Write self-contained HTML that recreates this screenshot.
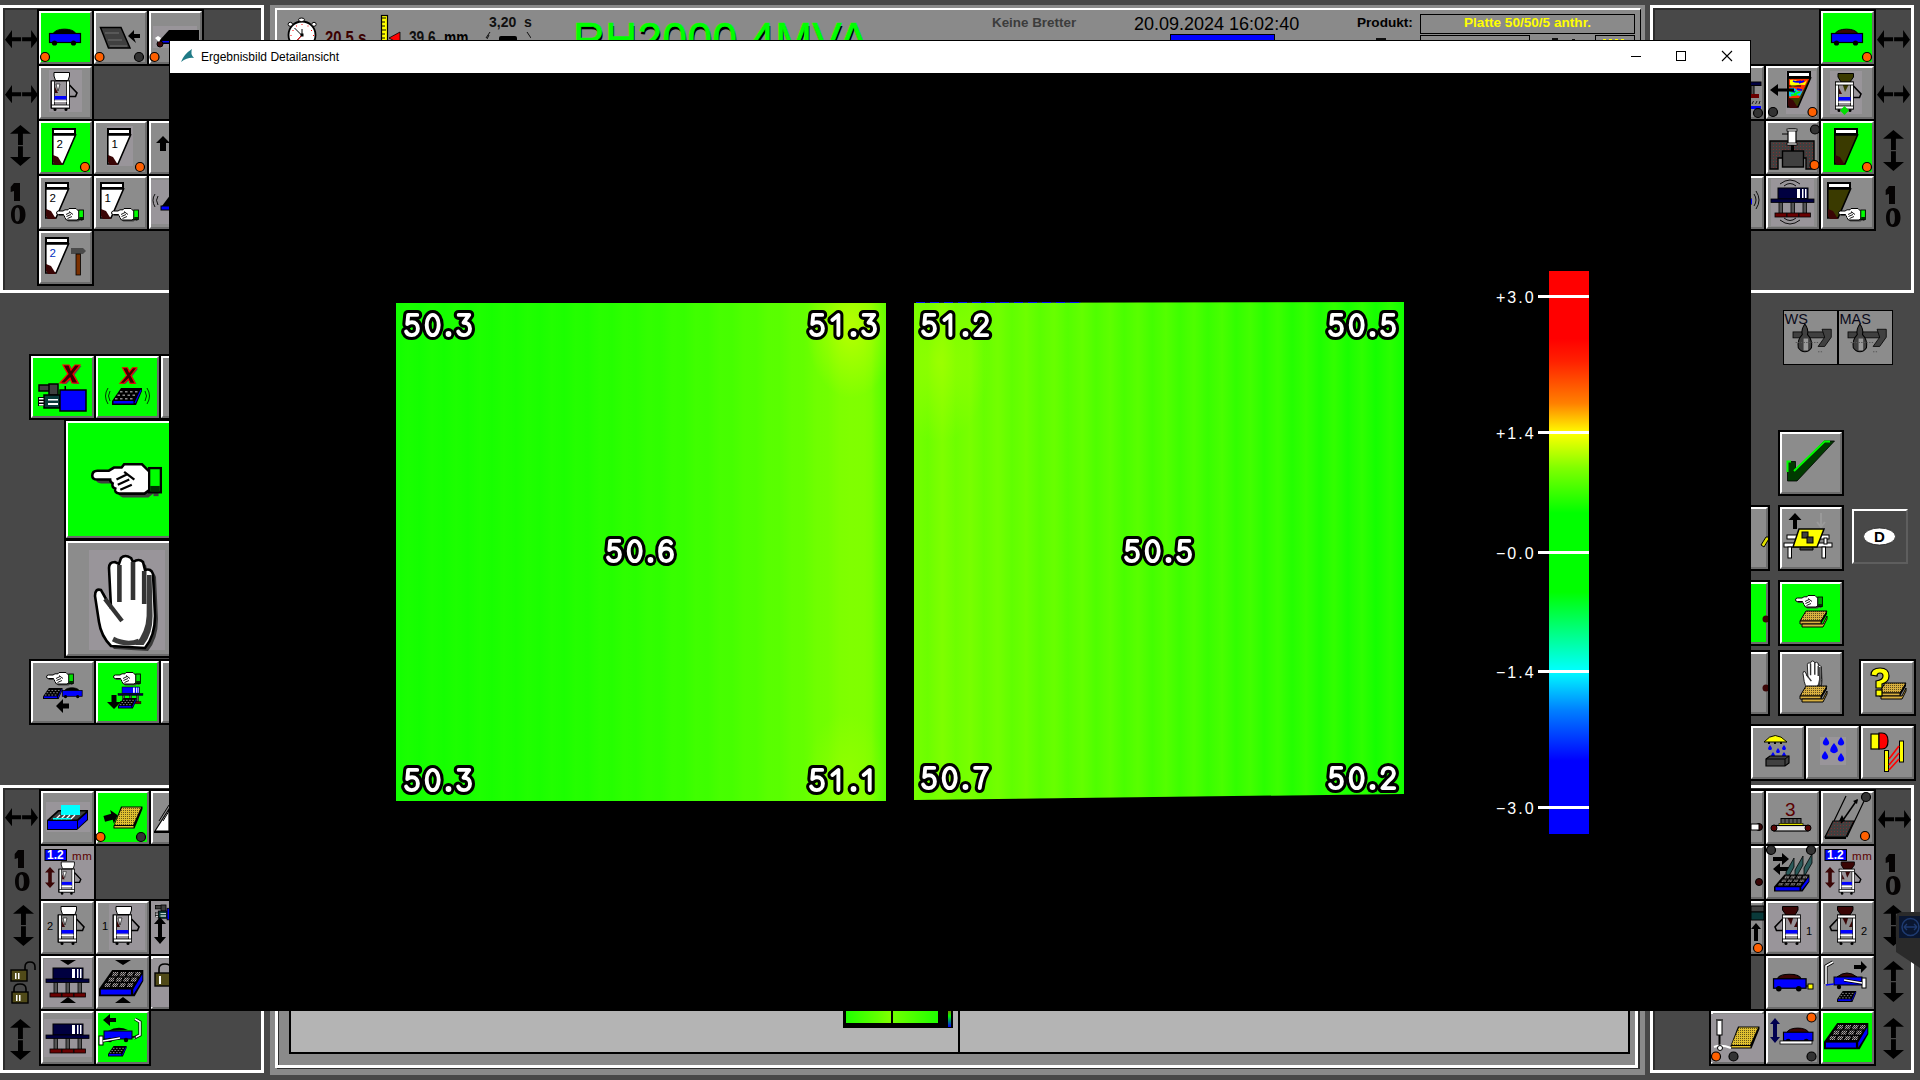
<!DOCTYPE html><html><head><meta charset="utf-8"><style>
html,body{margin:0;padding:0;width:1920px;height:1080px;overflow:hidden;background:#484848;font-family:"Liberation Sans",sans-serif}
div,span,svg{position:absolute;box-sizing:border-box}
.b{overflow:hidden}
.in{border-top:2px solid #fff;border-left:2px solid #fff;border-bottom:2px solid #6c6c6c;border-right:2px solid #6c6c6c}
.in svg{left:0;top:0;width:100%;height:100%}
.t{white-space:nowrap;line-height:1}
.num{font-size:34px;font-weight:bold;color:#fff;-webkit-text-stroke:6px #000;paint-order:stroke fill;letter-spacing:0.5px}
</style></head><body>
<div style="left:0px;top:5px;width:264px;height:288px;background:#484848;border:3px solid #fff;box-sizing:border-box"></div>
<div style="left:3px;top:8px;width:258px;height:282px;border-top:2px solid #2c2c2c;border-left:2px solid #2c2c2c;box-sizing:border-box"></div>
<div style="left:0px;top:785px;width:264px;height:288px;background:#484848;border:3px solid #fff;box-sizing:border-box"></div>
<div style="left:3px;top:788px;width:258px;height:282px;border-top:2px solid #2c2c2c;border-left:2px solid #2c2c2c;box-sizing:border-box"></div>
<div style="left:1650px;top:5px;width:264px;height:288px;background:#484848;border:3px solid #fff;box-sizing:border-box"></div>
<div style="left:1653px;top:8px;width:258px;height:282px;border-top:2px solid #2c2c2c;border-left:2px solid #2c2c2c;box-sizing:border-box"></div>
<div style="left:1650px;top:785px;width:264px;height:288px;background:#484848;border:3px solid #fff;box-sizing:border-box"></div>
<div style="left:1653px;top:788px;width:258px;height:282px;border-top:2px solid #2c2c2c;border-left:2px solid #2c2c2c;box-sizing:border-box"></div>
<svg style="left:0;top:0;width:0;height:0"><defs><pattern id="dots" width="2" height="2" patternUnits="userSpaceOnUse"><rect x="0" y="0" width="1" height="1" fill="#000" opacity="0.55"/></pattern><pattern id="rdots" width="3" height="3" patternUnits="userSpaceOnUse"><rect width="3" height="3" fill="#404040"/><rect x="1" y="1" width="1" height="1" fill="#803030"/></pattern><pattern id="speck" width="2" height="2" patternUnits="userSpaceOnUse"><rect width="2" height="2" fill="#222"/><rect width="1" height="1" fill="#b0a8a8"/><rect x="1" y="1" width="1" height="1" fill="#8a8484"/></pattern></defs></svg>
<svg style="left:4.9px;top:29.7px;width:34px;height:19px" viewBox="0 0 34 19"><path d="M0 9.7 L7 0 V7.2 H16.1 V11.3 H7 V18.3 Z M33 9.7 L26.1 0 V7.2 H17.1 V11.3 H26.1 V18.3 Z" fill="#000"/></svg>
<svg style="left:4.9px;top:84.5px;width:34px;height:19px" viewBox="0 0 34 19"><path d="M0 9.7 L7 0 V7.2 H16.1 V11.3 H7 V18.3 Z M33 9.7 L26.1 0 V7.2 H17.1 V11.3 H26.1 V18.3 Z" fill="#000"/></svg>
<svg style="left:10.0px;top:125.0px;width:22px;height:42px" viewBox="0 0 22 42"><path d="M10.4 0 L21 8.8 H12.9 V19.9 H8 V8.8 H0 Z M10.4 41.1 L21 32.1 H12.9 V21.3 H8 V32.1 H0 Z" fill="#000"/></svg>
<svg style="left:10px;top:182px;width:17px;height:43px" viewBox="0 0 17 43"><path d="M4 1 H10 V19 H4 V9 L0.7 10 V5 Z" fill="#050303"/><path d="M8.25 23 C13.2 23 15.5 27 15.5 32.5 C15.5 38 13.2 42 8.25 42 C3.3 42 1 38 1 32.5 C1 27 3.3 23 8.25 23 Z M7.35 25.6 C5.4 25.6 4.8 28.5 4.8 32.5 C4.8 36.5 5.4 39.4 7.35 39.4 C9.3 39.4 9.9 36.5 9.9 32.5 C9.9 28.5 9.3 25.6 7.35 25.6 Z" fill="#050303" fill-rule="evenodd"/></svg>
<div class="b" style="left:37px;top:9px;width:57px;height:57px;background:#000"><div class="in" style="left:2px;top:2px;width:53px;height:53px;background:#00ff00"></div><svg style="left:2px;top:2px;width:53px;height:53px" viewBox="0 0 53 53"><g transform="translate(10,17) scale(1.0)"><path d="M4 6 C6 -0.5 25 -0.5 27 6 Z" fill="#000" stroke="#000" stroke-width="1"/><rect x="0.5" y="5.5" width="31" height="9" fill="#0000ff" stroke="#000" stroke-width="1.2"/><circle cx="5.5" cy="15" r="2.6" fill="#000"/><circle cx="24.5" cy="15" r="2.6" fill="#000"/></g><circle cx="6" cy="46" r="4.5" fill="#ff6000" stroke="#000" stroke-width="1.2"/></svg></div>
<div class="b" style="left:92px;top:9px;width:57px;height:57px;background:#000"><div class="in" style="left:2px;top:2px;width:53px;height:53px;background:#8c8c8c"></div><svg style="left:2px;top:2px;width:53px;height:53px" viewBox="0 0 53 53"><path d="M6.5 16.5 H27 L36 37 H14.5 Z" fill="#404040" stroke="#000" stroke-width="1.5"/><path d="M11 22 H25 M14 29 H28 M16 35 H33" stroke="#707070" stroke-width="1"/><path d="M34 25 L40 19 L40 23 L46 23 L46 27 L40 27 L42 32 Z" fill="#000"/><circle cx="5.5" cy="46" r="4.5" fill="#ff6000" stroke="#000" stroke-width="1.2"/><circle cx="45" cy="46" r="4.5" fill="#333" stroke="#000" stroke-width="1.2"/></svg></div>
<div class="b" style="left:147px;top:9px;width:57px;height:57px;background:#000"><div class="in" style="left:2px;top:2px;width:53px;height:53px;background:#8c8c8c"></div><svg style="left:2px;top:2px;width:53px;height:53px" viewBox="0 0 53 53"><rect x="4" y="15" width="44" height="22" fill="#99959a"/><path d="M10 30 L20 19 H50 V33 H12 Z" fill="#000"/><rect x="12" y="30" width="38" height="1.5" fill="#0000ff"/><circle cx="11" cy="33" r="3" fill="#3a0505" stroke="#000"/><path d="M6 27 L9 25 L12 27 L10 31 Z" fill="#fff"/><circle cx="5.5" cy="46" r="4.5" fill="#ff6000" stroke="#000" stroke-width="1.2"/></svg></div>
<div class="b" style="left:37px;top:64px;width:57px;height:57px;background:#000"><div class="in" style="left:2px;top:2px;width:53px;height:53px;background:#8c8c8c"></div><svg style="left:2px;top:2px;width:53px;height:53px" viewBox="0 0 53 53"><rect x="10" y="4" width="33" height="42" fill="#99959a"/><g transform="translate(10,6)"><path d="M5 0.5 H20.5 V4 L19 8.5 H6.5 L5 4 Z" fill="#fff" stroke="#000" stroke-width="1"/><rect x="2" y="9" width="18.5" height="27" fill="none" stroke="#000" stroke-width="1"/><rect x="2.5" y="9" width="3" height="27" fill="#fff" stroke="#000" stroke-width="0.8"/><rect x="17.5" y="9" width="3" height="27" fill="#fff" stroke="#000" stroke-width="0.8"/><rect x="2.5" y="33" width="18" height="3" fill="#fff" stroke="#000" stroke-width="0.8"/><path d="M7 12 L11 12 L9 19 Z" fill="#fff" stroke="#000" stroke-width="0.6"/><path d="M6 15 L9 21 H6 Z" fill="#3a0505"/><rect x="5.5" y="24" width="12" height="3.5" fill="#0000ff"/><rect x="5.5" y="28.5" width="12" height="1.5" fill="#fff"/><path d="M20.5 13 L28 21 L26.5 24.5 H20.5" fill="none" stroke="#000" stroke-width="1.6"/><circle cx="6" cy="37.5" r="1.5" fill="#000"/><circle cx="17" cy="37.5" r="1.5" fill="#000"/></g></svg></div>
<div class="b" style="left:37px;top:119px;width:57px;height:57px;background:#000"><div class="in" style="left:2px;top:2px;width:53px;height:53px;background:#00ff00"></div><svg style="left:2px;top:2px;width:53px;height:53px" viewBox="0 0 53 53"><g><rect x="13" y="7" width="24" height="7" fill="#000"/><rect x="15" y="9" width="20" height="3" fill="#fff"/><path d="M13.8 14 H36.5 L24 43 H13.8 Z" fill="#fff" stroke="#000" stroke-width="1.6"/><path d="M14 34 L19 36 L24 44 L16 44 L14 41 Z" fill="#3a0505"/><text x="17.5" y="27" font-size="11.5" font-family="Liberation Sans" fill="#000">2</text></g><circle cx="46" cy="46" r="4.5" fill="#ff6000" stroke="#000" stroke-width="1.2"/></svg></div>
<div class="b" style="left:92px;top:119px;width:57px;height:57px;background:#000"><div class="in" style="left:2px;top:2px;width:53px;height:53px;background:#8c8c8c"></div><svg style="left:2px;top:2px;width:53px;height:53px" viewBox="0 0 53 53"><rect x="13" y="5" width="26" height="40" fill="#99959a"/><g><rect x="13" y="7" width="24" height="7" fill="#000"/><rect x="15" y="9" width="20" height="3" fill="#fff"/><path d="M13.8 14 H36.5 L24 43 H13.8 Z" fill="#fff" stroke="#000" stroke-width="1.6"/><path d="M14 34 L19 36 L24 44 L16 44 L14 41 Z" fill="#3a0505"/><text x="17.5" y="27" font-size="11.5" font-family="Liberation Sans" fill="#000">1</text></g><circle cx="46" cy="46" r="4.5" fill="#ff6000" stroke="#000" stroke-width="1.2"/></svg></div>
<div class="b" style="left:147px;top:119px;width:57px;height:57px;background:#000"><div class="in" style="left:2px;top:2px;width:53px;height:53px;background:#8c8c8c"></div><svg style="left:2px;top:2px;width:53px;height:53px" viewBox="0 0 53 53"><path d="M14 15 L21 22 H17 V30 H11 V22 H7 Z" fill="#000"/></svg></div>
<div class="b" style="left:37px;top:174px;width:57px;height:57px;background:#000"><div class="in" style="left:2px;top:2px;width:53px;height:53px;background:#8c8c8c"></div><svg style="left:2px;top:2px;width:53px;height:53px" viewBox="0 0 53 53"><g><rect x="6" y="6" width="24" height="7" fill="#000"/><rect x="8" y="8" width="20" height="3" fill="#fff"/><path d="M6.8 13 H29.5 L17 42 H6.8 Z" fill="#fff" stroke="#000" stroke-width="1.6"/><path d="M7 33 L12 35 L17 43 L9 43 L7 40 Z" fill="#3a0505"/><text x="10.5" y="26" font-size="11.5" font-family="Liberation Sans" fill="#000">2</text></g><g transform="translate(17,32)"><path d="M0.5 5 Q0.5 3 2.5 3 H7 L9 1.8 H12 L13 0.5 H20 L23 3.5 V10.5 L21 12 H11 Q9 11.5 9.5 10 Q8 9.5 8.5 8 Q7.5 7.5 7.5 6.5 H2.5 Q0.5 6.5 0.5 5 Z" fill="#404040" transform="translate(1.5,1.5)"/><path d="M0.5 5 Q0.5 3 2.5 3 H7 L9 1.8 H12 L13 0.5 H20 L23 3.5 V10.5 L21 12 H11 Q9 11.5 9.5 10 Q8 9.5 8.5 8 Q7.5 7.5 7.5 6.5 H2.5 Q0.5 6.5 0.5 5 Z" fill="#fff" stroke="#000" stroke-width="1"/><path d="M10 6.5 L14 4.5 M10.5 8.5 L15 6.5 M11.5 10.5 L16 8.5 M13 3.5 L17 6.5" stroke="#000" stroke-width="0.9" fill="none"/><rect x="24.5" y="3" width="2" height="10" fill="#404040"/><rect x="22.8" y="2" width="4.6" height="9.5" fill="#00ff00" stroke="#000" stroke-width="0.9"/><rect x="23.2" y="9" width="3.8" height="2" fill="#003000"/></g></svg></div>
<div class="b" style="left:92px;top:174px;width:57px;height:57px;background:#000"><div class="in" style="left:2px;top:2px;width:53px;height:53px;background:#8c8c8c"></div><svg style="left:2px;top:2px;width:53px;height:53px" viewBox="0 0 53 53"><g><rect x="6" y="6" width="24" height="7" fill="#000"/><rect x="8" y="8" width="20" height="3" fill="#fff"/><path d="M6.8 13 H29.5 L17 42 H6.8 Z" fill="#fff" stroke="#000" stroke-width="1.6"/><path d="M7 33 L12 35 L17 43 L9 43 L7 40 Z" fill="#3a0505"/><text x="10.5" y="26" font-size="11.5" font-family="Liberation Sans" fill="#000">1</text></g><g transform="translate(17,32)"><path d="M0.5 5 Q0.5 3 2.5 3 H7 L9 1.8 H12 L13 0.5 H20 L23 3.5 V10.5 L21 12 H11 Q9 11.5 9.5 10 Q8 9.5 8.5 8 Q7.5 7.5 7.5 6.5 H2.5 Q0.5 6.5 0.5 5 Z" fill="#404040" transform="translate(1.5,1.5)"/><path d="M0.5 5 Q0.5 3 2.5 3 H7 L9 1.8 H12 L13 0.5 H20 L23 3.5 V10.5 L21 12 H11 Q9 11.5 9.5 10 Q8 9.5 8.5 8 Q7.5 7.5 7.5 6.5 H2.5 Q0.5 6.5 0.5 5 Z" fill="#fff" stroke="#000" stroke-width="1"/><path d="M10 6.5 L14 4.5 M10.5 8.5 L15 6.5 M11.5 10.5 L16 8.5 M13 3.5 L17 6.5" stroke="#000" stroke-width="0.9" fill="none"/><rect x="24.5" y="3" width="2" height="10" fill="#404040"/><rect x="22.8" y="2" width="4.6" height="9.5" fill="#00ff00" stroke="#000" stroke-width="0.9"/><rect x="23.2" y="9" width="3.8" height="2" fill="#003000"/></g></svg></div>
<div class="b" style="left:147px;top:174px;width:57px;height:57px;background:#000"><div class="in" style="left:2px;top:2px;width:53px;height:53px;background:#8c8c8c"></div><svg style="left:2px;top:2px;width:53px;height:53px" viewBox="0 0 53 53"><rect x="2" y="4" width="48" height="44" fill="#99959a"/><path d="M6 18 Q2 24 6 31 M9 20 Q6 24 9 29" fill="none" stroke="#000" stroke-width="0.9"/><rect x="12" y="30" width="20" height="4" fill="#0000ff" stroke="#000"/><path d="M13 30 L22 18 L28 18 L20 30Z" fill="#000"/></svg></div>
<div class="b" style="left:37px;top:229px;width:57px;height:57px;background:#000"><div class="in" style="left:2px;top:2px;width:53px;height:53px;background:#8c8c8c"></div><svg style="left:2px;top:2px;width:53px;height:53px" viewBox="0 0 53 53"><g><rect x="6" y="6" width="24" height="7" fill="#000"/><rect x="8" y="8" width="20" height="3" fill="#fff"/><path d="M6.8 13 H29.5 L17 42 H6.8 Z" fill="#fff" stroke="#000" stroke-width="1.6"/><path d="M7 33 L12 35 L17 43 L9 43 L7 40 Z" fill="#3a0505"/><text x="10.5" y="26" font-size="11.5" font-family="Liberation Sans" fill="#0030c0">2</text></g><g transform="translate(32,17)"><path d="M0 0 H12 L15 3 L12 6 H0 Z" fill="#4a4a4a"/><rect x="5" y="6" width="4.5" height="21" fill="#7a3000" stroke="#000" stroke-width="0.8"/></g></svg></div>
<div class="b" style="left:29px;top:354px;width:67px;height:66px;background:#000"><div class="in" style="left:2px;top:2px;width:63px;height:62px;background:#00ff00"></div><svg style="left:2px;top:2px;width:63px;height:62px" viewBox="0 0 63 62"><g transform="translate(28,8) scale(1.0)"><path d="M4 1 H10 L12 6 L16 1 H21 L14 10 L19 19 H13 L11 14 L6 19 H1 L9 10 Z" fill="#505050" transform="translate(1.5,1)"/><path d="M4 1 H10 L12 6 L16 1 H21 L14 10 L19 19 H13 L11 14 L6 19 H1 L9 10 Z" fill="#3a0000" stroke="#ff0000" stroke-width="1.2"/></g><g transform="translate(7,28)"><rect x="1" y="1" width="11" height="6" fill="#404040" stroke="#000" stroke-width="1.5"/><rect x="11" y="0" width="9" height="11" fill="#404040" stroke="#000" stroke-width="1.5"/><rect x="6" y="11" width="16" height="13" fill="#0a3a3a" stroke="#000" stroke-width="1.5"/><rect x="10" y="15" width="10" height="1.5" fill="#fff"/><rect x="10" y="19" width="10" height="2" fill="#fff"/><rect x="0" y="13" width="6" height="9" fill="#000"/><rect x="1" y="14" width="4.5" height="1.5" fill="#fff"/><rect x="1" y="17" width="4.5" height="1.5" fill="#fff"/><rect x="1" y="20" width="4.5" height="1.5" fill="#fff"/><rect x="22" y="6" width="26" height="21" fill="#0000ff" stroke="#000" stroke-width="1.5"/><rect x="26.5" y="2" width="1.5" height="4" fill="#000"/></g></svg></div>
<div class="b" style="left:94px;top:354px;width:67px;height:66px;background:#000"><div class="in" style="left:2px;top:2px;width:63px;height:62px;background:#00ff00"></div><svg style="left:2px;top:2px;width:63px;height:62px" viewBox="0 0 63 62"><g transform="translate(23,11) scale(0.85)"><path d="M4 1 H10 L12 6 L16 1 H21 L14 10 L19 19 H13 L11 14 L6 19 H1 L9 10 Z" fill="#505050" transform="translate(1.5,1)"/><path d="M4 1 H10 L12 6 L16 1 H21 L14 10 L19 19 H13 L11 14 L6 19 H1 L9 10 Z" fill="#3a0000" stroke="#ff0000" stroke-width="1.2"/></g><g transform="translate(16,32) scale(1.0)"><path d="M-4 0 Q-9 8 -4 16 M-2 3 Q-5 8 -2 13" fill="none" stroke="#000" stroke-width="0.8"/><path d="M35 0 Q40 8 35 16 M33 3 Q36 8 33 13" fill="none" stroke="#000" stroke-width="0.8"/><path d="M9 0 H30 V3 L24 17 H0 V13 Z" fill="#000"/><rect x="1.5" y="13" width="20" height="2.5" fill="#0000ff"/><path d="M23 15 L29 2" stroke="#0000ff" stroke-width="1.2"/><rect x="8.0" y="3.0" width="2.5" height="1.5" fill="#888"/><rect x="5.5" y="6.5" width="2.5" height="1.5" fill="#888"/><rect x="3.0" y="10.0" width="2.5" height="1.5" fill="#888"/><rect x="13.0" y="3.0" width="2.5" height="1.5" fill="#888"/><rect x="10.5" y="6.5" width="2.5" height="1.5" fill="#888"/><rect x="8.0" y="10.0" width="2.5" height="1.5" fill="#888"/><rect x="18.0" y="3.0" width="2.5" height="1.5" fill="#888"/><rect x="15.5" y="6.5" width="2.5" height="1.5" fill="#888"/><rect x="13.0" y="10.0" width="2.5" height="1.5" fill="#888"/><rect x="23.0" y="3.0" width="2.5" height="1.5" fill="#888"/><rect x="20.5" y="6.5" width="2.5" height="1.5" fill="#888"/><rect x="18.0" y="10.0" width="2.5" height="1.5" fill="#888"/></g></svg></div>
<div class="b" style="left:159px;top:354px;width:67px;height:66px;background:#000"><div class="in" style="left:2px;top:2px;width:63px;height:62px;background:#8c8c8c"></div></div>
<div class="b" style="left:64px;top:419px;width:127px;height:121px;background:#000"><div class="in" style="left:2px;top:2px;width:123px;height:117px;background:#00ff00"></div><svg style="left:2px;top:2px;width:123px;height:117px" viewBox="0 0 123 117"><g transform="translate(25,42) scale(2.55)"><g transform="translate(0,0)"><path d="M0.5 5 Q0.5 3 2.5 3 H7 L9 1.8 H12 L13 0.5 H20 L23 3.5 V10.5 L21 12 H11 Q9 11.5 9.5 10 Q8 9.5 8.5 8 Q7.5 7.5 7.5 6.5 H2.5 Q0.5 6.5 0.5 5 Z" fill="#404040" transform="translate(1.5,1.5)"/><path d="M0.5 5 Q0.5 3 2.5 3 H7 L9 1.8 H12 L13 0.5 H20 L23 3.5 V10.5 L21 12 H11 Q9 11.5 9.5 10 Q8 9.5 8.5 8 Q7.5 7.5 7.5 6.5 H2.5 Q0.5 6.5 0.5 5 Z" fill="#fff" stroke="#000" stroke-width="1"/><path d="M10 6.5 L14 4.5 M10.5 8.5 L15 6.5 M11.5 10.5 L16 8.5 M13 3.5 L17 6.5" stroke="#000" stroke-width="0.9" fill="none"/><rect x="24.5" y="3" width="2" height="10" fill="#404040"/><rect x="22.8" y="2" width="4.6" height="9.5" fill="#00ff00" stroke="#000" stroke-width="0.9"/><rect x="23.2" y="9" width="3.8" height="2" fill="#003000"/></g></g></svg></div>
<div class="b" style="left:64px;top:539px;width:127px;height:119px;background:#000"><div class="in" style="left:2px;top:2px;width:123px;height:115px;background:#8c8c8c"></div><svg style="left:2px;top:2px;width:123px;height:115px" viewBox="0 0 123 115"><rect x="23" y="9" width="76" height="100" fill="#99959a"/><g transform="translate(29,15) scale(2.0)"><path d="M8 45 Q3 40 2 33 L0 20 Q0 16 3 17 L8 26 L7 6 Q7 3 10 3 L12 4 L13 1 Q15 -1 18 1 L19 3 Q22 1 24 3 L25 7 Q28 6 29 9 L30 30 Q30 40 25 46 Z" fill="#3a3a3a" transform="translate(1.5,1.5)"/><path d="M8 45 Q3 40 2 33 L0 20 Q0 16 3 17 L8 26 L7 6 Q7 3 10 3 L12 4 L13 1 Q15 -1 18 1 L19 3 Q22 1 24 3 L25 7 Q28 6 29 9 L30 30 Q30 40 25 46 Z" fill="#fff" stroke="#000" stroke-width="1.3"/><path d="M26 9.5 L28.3 9.5 L28.8 30 Q28.8 39 24.3 44.5 L20 44.5 Q25.5 38 25.8 30 Z" fill="#3c3c3c"/><path d="M12.2 4.5 V23 M19 3 V22 M24.6 7.5 V24" stroke="#333" stroke-width="2.3" fill="none"/><path d="M5 21.5 L13.5 32.5" stroke="#333" stroke-width="2.2" fill="none"/><path d="M9 41.5 Q16 45 22 42.5" stroke="#3c3c3c" stroke-width="2.4" fill="none"/></g></svg></div>
<div class="b" style="left:29px;top:659px;width:67px;height:66px;background:#000"><div class="in" style="left:2px;top:2px;width:63px;height:62px;background:#8c8c8c"></div><svg style="left:2px;top:2px;width:63px;height:62px" viewBox="0 0 63 62"><g transform="translate(15,11)"><path d="M0.5 5 Q0.5 3 2.5 3 H7 L9 1.8 H12 L13 0.5 H20 L23 3.5 V10.5 L21 12 H11 Q9 11.5 9.5 10 Q8 9.5 8.5 8 Q7.5 7.5 7.5 6.5 H2.5 Q0.5 6.5 0.5 5 Z" fill="#404040" transform="translate(1.5,1.5)"/><path d="M0.5 5 Q0.5 3 2.5 3 H7 L9 1.8 H12 L13 0.5 H20 L23 3.5 V10.5 L21 12 H11 Q9 11.5 9.5 10 Q8 9.5 8.5 8 Q7.5 7.5 7.5 6.5 H2.5 Q0.5 6.5 0.5 5 Z" fill="#fff" stroke="#000" stroke-width="1"/><path d="M10 6.5 L14 4.5 M10.5 8.5 L15 6.5 M11.5 10.5 L16 8.5 M13 3.5 L17 6.5" stroke="#000" stroke-width="0.9" fill="none"/><rect x="24.5" y="3" width="2" height="10" fill="#404040"/><rect x="22.8" y="2" width="4.6" height="9.5" fill="#00e000" stroke="#000" stroke-width="0.9"/><rect x="23.2" y="9" width="3.8" height="2" fill="#003000"/></g><g transform="translate(12,27) scale(0.65)"><path d="M9 0 H30 V3 L24 17 H0 V13 Z" fill="#000"/><rect x="1.5" y="13" width="20" height="2.5" fill="#0000ff"/><path d="M23 15 L29 2" stroke="#0000ff" stroke-width="1.2"/><rect x="8.0" y="3.0" width="2.5" height="1.5" fill="#888"/><rect x="5.5" y="6.5" width="2.5" height="1.5" fill="#888"/><rect x="3.0" y="10.0" width="2.5" height="1.5" fill="#888"/><rect x="13.0" y="3.0" width="2.5" height="1.5" fill="#888"/><rect x="10.5" y="6.5" width="2.5" height="1.5" fill="#888"/><rect x="8.0" y="10.0" width="2.5" height="1.5" fill="#888"/><rect x="18.0" y="3.0" width="2.5" height="1.5" fill="#888"/><rect x="15.5" y="6.5" width="2.5" height="1.5" fill="#888"/><rect x="13.0" y="10.0" width="2.5" height="1.5" fill="#888"/><rect x="23.0" y="3.0" width="2.5" height="1.5" fill="#888"/><rect x="20.5" y="6.5" width="2.5" height="1.5" fill="#888"/><rect x="18.0" y="10.0" width="2.5" height="1.5" fill="#888"/></g><g transform="translate(31,26) scale(0.64)"><path d="M4 6 C6 -0.5 25 -0.5 27 6 Z" fill="#000" stroke="#000" stroke-width="1"/><rect x="0.5" y="5.5" width="31" height="9" fill="#0000ff" stroke="#000" stroke-width="1.2"/><circle cx="5.5" cy="15" r="2.6" fill="#000"/><circle cx="24.5" cy="15" r="2.6" fill="#000"/></g><path d="M25 45 L32 38 V42.5 H38 V47.5 H32 V52 Z" fill="#000"/></svg></div>
<div class="b" style="left:94px;top:659px;width:67px;height:66px;background:#000"><div class="in" style="left:2px;top:2px;width:63px;height:62px;background:#00ff00"></div><svg style="left:2px;top:2px;width:63px;height:62px" viewBox="0 0 63 62"><g transform="translate(17,11)"><path d="M0.5 5 Q0.5 3 2.5 3 H7 L9 1.8 H12 L13 0.5 H20 L23 3.5 V10.5 L21 12 H11 Q9 11.5 9.5 10 Q8 9.5 8.5 8 Q7.5 7.5 7.5 6.5 H2.5 Q0.5 6.5 0.5 5 Z" fill="#404040" transform="translate(1.5,1.5)"/><path d="M0.5 5 Q0.5 3 2.5 3 H7 L9 1.8 H12 L13 0.5 H20 L23 3.5 V10.5 L21 12 H11 Q9 11.5 9.5 10 Q8 9.5 8.5 8 Q7.5 7.5 7.5 6.5 H2.5 Q0.5 6.5 0.5 5 Z" fill="#fff" stroke="#000" stroke-width="1"/><path d="M10 6.5 L14 4.5 M10.5 8.5 L15 6.5 M11.5 10.5 L16 8.5 M13 3.5 L17 6.5" stroke="#000" stroke-width="0.9" fill="none"/><rect x="24.5" y="3" width="2" height="10" fill="#404040"/><rect x="22.8" y="2" width="4.6" height="9.5" fill="#00e000" stroke="#000" stroke-width="0.9"/><rect x="23.2" y="9" width="3.8" height="2" fill="#003000"/></g><g transform="translate(22,26) scale(0.58)"><rect x="7" y="0" width="30" height="11" fill="#0000ff" stroke="#000"/><rect x="26" y="1" width="3" height="9" fill="#fff"/><rect x="31" y="1" width="1.5" height="9" fill="#fff"/><rect x="34" y="1" width="1.5" height="9" fill="#fff"/><rect x="0" y="11" width="43" height="3.5" fill="#000040" stroke="#000" stroke-width="0.8"/><rect x="8" y="14.5" width="3.5" height="11" fill="#555" stroke="#000" stroke-width="0.8"/><rect x="4" y="25" width="11.5" height="4" fill="#6a0000" stroke="#000" stroke-width="0.8"/><rect x="20" y="14.5" width="3.5" height="11" fill="#555" stroke="#000" stroke-width="0.8"/><rect x="16" y="25" width="11.5" height="4" fill="#6a0000" stroke="#000" stroke-width="0.8"/><rect x="32" y="14.5" width="3.5" height="11" fill="#555" stroke="#000" stroke-width="0.8"/><rect x="28" y="25" width="11.5" height="4" fill="#6a0000" stroke="#000" stroke-width="0.8"/></g><path d="M11 41 H25 L18 48 Z M15.5 34 H20.5 V41 H15.5Z" fill="#000"/><g transform="translate(22,37) scale(0.62)"><path d="M9 0 H30 V3 L24 17 H0 V13 Z" fill="#000"/><rect x="1.5" y="13" width="20" height="2.5" fill="#0000ff"/><path d="M23 15 L29 2" stroke="#0000ff" stroke-width="1.2"/><rect x="8.0" y="3.0" width="2.5" height="1.5" fill="#888"/><rect x="5.5" y="6.5" width="2.5" height="1.5" fill="#888"/><rect x="3.0" y="10.0" width="2.5" height="1.5" fill="#888"/><rect x="13.0" y="3.0" width="2.5" height="1.5" fill="#888"/><rect x="10.5" y="6.5" width="2.5" height="1.5" fill="#888"/><rect x="8.0" y="10.0" width="2.5" height="1.5" fill="#888"/><rect x="18.0" y="3.0" width="2.5" height="1.5" fill="#888"/><rect x="15.5" y="6.5" width="2.5" height="1.5" fill="#888"/><rect x="13.0" y="10.0" width="2.5" height="1.5" fill="#888"/><rect x="23.0" y="3.0" width="2.5" height="1.5" fill="#888"/><rect x="20.5" y="6.5" width="2.5" height="1.5" fill="#888"/><rect x="18.0" y="10.0" width="2.5" height="1.5" fill="#888"/></g></svg></div>
<div class="b" style="left:159px;top:659px;width:67px;height:66px;background:#000"><div class="in" style="left:2px;top:2px;width:63px;height:62px;background:#8c8c8c"></div></div>
<svg style="left:5.0px;top:808.0px;width:34px;height:19px" viewBox="0 0 34 19"><path d="M0 9.7 L7 0 V7.2 H16.1 V11.3 H7 V18.3 Z M33 9.7 L26.1 0 V7.2 H17.1 V11.3 H26.1 V18.3 Z" fill="#000"/></svg>
<svg style="left:14px;top:849px;width:17px;height:43px" viewBox="0 0 17 43"><path d="M4 1 H10 V19 H4 V9 L0.7 10 V5 Z" fill="#050303"/><path d="M8.25 23 C13.2 23 15.5 27 15.5 32.5 C15.5 38 13.2 42 8.25 42 C3.3 42 1 38 1 32.5 C1 27 3.3 23 8.25 23 Z M7.35 25.6 C5.4 25.6 4.8 28.5 4.8 32.5 C4.8 36.5 5.4 39.4 7.35 39.4 C9.3 39.4 9.9 36.5 9.9 32.5 C9.9 28.5 9.3 25.6 7.35 25.6 Z" fill="#050303" fill-rule="evenodd"/></svg>
<svg style="left:13.0px;top:905.0px;width:22px;height:42px" viewBox="0 0 22 42"><path d="M10.4 0 L21 8.8 H12.9 V19.9 H8 V8.8 H0 Z M10.4 41.1 L21 32.1 H12.9 V21.3 H8 V32.1 H0 Z" fill="#000"/></svg>
<svg style="left:10.0px;top:1019.0px;width:22px;height:42px" viewBox="0 0 22 42"><path d="M10.4 0 L21 8.8 H12.9 V19.9 H8 V8.8 H0 Z M10.4 41.1 L21 32.1 H12.9 V21.3 H8 V32.1 H0 Z" fill="#000"/></svg>
<svg style="left:10px;top:961px;width:28px;height:22px" viewBox="0 0 28 22"><path d="M15 10 V6 Q15 1 20 1 Q25 1 25 6 V9" fill="none" stroke="#000" stroke-width="1.6"/><rect x="1" y="9" width="16" height="11" fill="#504a18" stroke="#000" stroke-width="1.4"/><rect x="5" y="12" width="1.5" height="6" fill="#fff"/><rect x="8" y="12" width="1.5" height="6" fill="#fff"/></svg>
<svg style="left:11px;top:983px;width:28px;height:22px" viewBox="0 0 28 22"><path d="M3 9 V6 Q3 1 9 1 Q15 1 15 6 V9" fill="none" stroke="#000" stroke-width="1.6"/><rect x="1" y="9" width="16" height="11" fill="#504a18" stroke="#000" stroke-width="1.4"/><rect x="5" y="12" width="1.5" height="6" fill="#fff"/><rect x="8" y="12" width="1.5" height="6" fill="#fff"/></svg>
<div class="b" style="left:39px;top:789px;width:57px;height:57px;background:#000"><div class="in" style="left:2px;top:2px;width:53px;height:53px;background:#8c8c8c"></div><svg style="left:2px;top:2px;width:53px;height:53px" viewBox="0 0 53 53"><rect x="5" y="11" width="44" height="30" fill="#99959a"/><g transform="translate(5,14)"><path d="M12 5 H42 V15 L31 25 H1 V15 Z" fill="#000"/><path d="M13 6.5 H40 L31 14.5 H4 Z" fill="#404040"/><rect x="15" y="0" width="19" height="10" fill="#00ffff"/><path d="M10 14 L14 10 M15 14 L19 10 M20 14 L24 10 M25 14 L29 10" stroke="#fff" stroke-width="1.3"/><rect x="7" y="13" width="18" height="1.5" fill="#00ffff"/><rect x="2" y="16" width="29" height="8" fill="#0000ff"/><path d="M32 16 L41 8 V14.5 L32 23 Z" fill="#0000ff"/></g></svg></div>
<div class="b" style="left:94px;top:789px;width:57px;height:57px;background:#000"><div class="in" style="left:2px;top:2px;width:53px;height:53px;background:#00ff00"></div><svg style="left:2px;top:2px;width:53px;height:53px" viewBox="0 0 53 53"><g transform="translate(17,15) scale(1.0)"><path d="M8 0.5 H29.5 V3 L21.5 22.5 H0.5 V20 Z" fill="#000"/><path d="M9 1.5 H28 L20 19 H1.5 Z" fill="#e0c030"/><rect x="1.5" y="20" width="19" height="1.5" fill="#e0c030"/><path d="M9 1.5 H28 L20 19 H1.5 Z" fill="url(#dots)"/></g><path d="M8 23 H16 V19 L22 26 L16 33 V29 H8 Z" fill="#000" transform="rotate(-15 15 26)"/><circle cx="4.5" cy="46" r="4.5" fill="#ff6000" stroke="#000" stroke-width="1.2"/><circle cx="45" cy="46" r="4.5" fill="#333" stroke="#000" stroke-width="1.2"/></svg></div>
<div class="b" style="left:149px;top:789px;width:57px;height:57px;background:#000"><div class="in" style="left:2px;top:2px;width:53px;height:53px;background:#8c8c8c"></div><svg style="left:2px;top:2px;width:53px;height:53px" viewBox="0 0 53 53"><path d="M4 40 L18 18 V40 Z" fill="#fff" stroke="#000" stroke-width="1.2"/><path d="M8 30 L18 14 M12 30 L18 20" stroke="#000" stroke-width="1"/><rect x="3" y="40" width="16" height="2" fill="#000"/></svg></div>
<div class="b" style="left:39px;top:844px;width:57px;height:57px;background:#000"><div class="in" style="left:2px;top:2px;width:53px;height:53px;background:#8c8c8c"></div><svg style="left:2px;top:2px;width:53px;height:53px" viewBox="0 0 53 53"><rect x="0" y="0" width="53" height="53" fill="#99959a"/><rect x="4" y="3.5" width="21.5" height="11" fill="#0000ff" stroke="#000" stroke-width="1"/><text x="6" y="13" font-size="12" font-weight="bold" font-family="Liberation Sans" fill="#fff">1.2</text><text x="31" y="13.5" font-size="11.5" font-family="Liberation Sans" fill="#5a0000" letter-spacing="0.6">mm</text><path d="M9 21 L14 26.5 H10.8 V36.5 H14 L9 42 L4 36.5 H7.2 V26.5 H4 Z" fill="#3a0505"/><g transform="translate(16,15.5) scale(0.85)"><g transform="translate(0,0)"><path d="M5 0.5 H20.5 V4 L19 8.5 H6.5 L5 4 Z" fill="#fff" stroke="#000" stroke-width="1"/><rect x="2" y="9" width="18.5" height="27" fill="none" stroke="#000" stroke-width="1"/><rect x="2.5" y="9" width="3" height="27" fill="#fff" stroke="#000" stroke-width="0.8"/><rect x="17.5" y="9" width="3" height="27" fill="#fff" stroke="#000" stroke-width="0.8"/><rect x="2.5" y="33" width="18" height="3" fill="#fff" stroke="#000" stroke-width="0.8"/><path d="M7 12 L11 12 L9 19 Z" fill="#fff" stroke="#000" stroke-width="0.6"/><path d="M6 15 L9 21 H6 Z" fill="#3a0505"/><rect x="5.5" y="24" width="12" height="3.5" fill="#0000ff"/><rect x="5.5" y="28.5" width="12" height="1.5" fill="#fff"/><path d="M20.5 13 L28 21 L26.5 24.5 H20.5" fill="none" stroke="#000" stroke-width="1.6"/><circle cx="6" cy="37.5" r="1.5" fill="#000"/><circle cx="17" cy="37.5" r="1.5" fill="#000"/></g></g></svg></div>
<div class="b" style="left:39px;top:899px;width:57px;height:57px;background:#000"><div class="in" style="left:2px;top:2px;width:53px;height:53px;background:#8c8c8c"></div><svg style="left:2px;top:2px;width:53px;height:53px" viewBox="0 0 53 53"><g transform="translate(15,5)"><path d="M5 0.5 H20.5 V4 L19 8.5 H6.5 L5 4 Z" fill="#fff" stroke="#000" stroke-width="1"/><rect x="2" y="9" width="18.5" height="27" fill="none" stroke="#000" stroke-width="1"/><rect x="2.5" y="9" width="3" height="27" fill="#fff" stroke="#000" stroke-width="0.8"/><rect x="17.5" y="9" width="3" height="27" fill="#fff" stroke="#000" stroke-width="0.8"/><rect x="2.5" y="33" width="18" height="3" fill="#fff" stroke="#000" stroke-width="0.8"/><path d="M7 12 L11 12 L9 19 Z" fill="#fff" stroke="#000" stroke-width="0.6"/><path d="M6 15 L9 21 H6 Z" fill="#3a0505"/><rect x="5.5" y="24" width="12" height="3.5" fill="#0000ff"/><rect x="5.5" y="28.5" width="12" height="1.5" fill="#fff"/><path d="M20.5 13 L28 21 L26.5 24.5 H20.5" fill="none" stroke="#000" stroke-width="1.6"/><circle cx="6" cy="37.5" r="1.5" fill="#000"/><circle cx="17" cy="37.5" r="1.5" fill="#000"/><text x="-9" y="24" font-size="11" font-family="Liberation Sans" fill="#000">2</text></g></svg></div>
<div class="b" style="left:94px;top:899px;width:57px;height:57px;background:#000"><div class="in" style="left:2px;top:2px;width:53px;height:53px;background:#8c8c8c"></div><svg style="left:2px;top:2px;width:53px;height:53px" viewBox="0 0 53 53"><rect x="13" y="3" width="36" height="46" fill="#99959a"/><g transform="translate(15,5)"><path d="M5 0.5 H20.5 V4 L19 8.5 H6.5 L5 4 Z" fill="#fff" stroke="#000" stroke-width="1"/><rect x="2" y="9" width="18.5" height="27" fill="none" stroke="#000" stroke-width="1"/><rect x="2.5" y="9" width="3" height="27" fill="#fff" stroke="#000" stroke-width="0.8"/><rect x="17.5" y="9" width="3" height="27" fill="#fff" stroke="#000" stroke-width="0.8"/><rect x="2.5" y="33" width="18" height="3" fill="#fff" stroke="#000" stroke-width="0.8"/><path d="M7 12 L11 12 L9 19 Z" fill="#fff" stroke="#000" stroke-width="0.6"/><path d="M6 15 L9 21 H6 Z" fill="#3a0505"/><rect x="5.5" y="24" width="12" height="3.5" fill="#0000ff"/><rect x="5.5" y="28.5" width="12" height="1.5" fill="#fff"/><path d="M20.5 13 L28 21 L26.5 24.5 H20.5" fill="none" stroke="#000" stroke-width="1.6"/><circle cx="6" cy="37.5" r="1.5" fill="#000"/><circle cx="17" cy="37.5" r="1.5" fill="#000"/><text x="-9" y="24" font-size="11" font-family="Liberation Sans" fill="#000">1</text></g></svg></div>
<div class="b" style="left:149px;top:899px;width:57px;height:57px;background:#000"><div class="in" style="left:2px;top:2px;width:53px;height:53px;background:#8c8c8c"></div><svg style="left:2px;top:2px;width:53px;height:53px" viewBox="0 0 53 53"><rect x="0" y="0" width="53" height="53" fill="#99959a"/><g transform="translate(4,4) scale(0.55)"><g transform="translate(0,0)"><rect x="1" y="1" width="11" height="6" fill="#404040" stroke="#000" stroke-width="1.5"/><rect x="11" y="0" width="9" height="11" fill="#404040" stroke="#000" stroke-width="1.5"/><rect x="6" y="11" width="16" height="13" fill="#0a3a3a" stroke="#000" stroke-width="1.5"/><rect x="10" y="15" width="10" height="1.5" fill="#fff"/><rect x="10" y="19" width="10" height="2" fill="#fff"/><rect x="0" y="13" width="6" height="9" fill="#000"/><rect x="1" y="14" width="4.5" height="1.5" fill="#fff"/><rect x="1" y="17" width="4.5" height="1.5" fill="#fff"/><rect x="1" y="20" width="4.5" height="1.5" fill="#fff"/><rect x="22" y="6" width="26" height="21" fill="#0000ff" stroke="#000" stroke-width="1.5"/><rect x="26.5" y="2" width="1.5" height="4" fill="#000"/></g></g><path d="M9 16 L15 23 H11 V36 H15 L9 43 L3 36 H7 V23 H3 Z" fill="#000"/></svg></div>
<div class="b" style="left:39px;top:954px;width:57px;height:57px;background:#000"><div class="in" style="left:2px;top:2px;width:53px;height:53px;background:#8c8c8c"></div><svg style="left:2px;top:2px;width:53px;height:53px" viewBox="0 0 53 53"><rect x="3" y="3" width="48" height="48" fill="#99959a"/><path d="M19 4 H35 L27 9 Z M19 47 H35 L27 41 Z" fill="#000"/><g transform="translate(5,12) scale(1.0)"><rect x="7" y="0" width="30" height="11" fill="#000040" stroke="#000"/><rect x="26" y="1" width="3" height="9" fill="#fff"/><rect x="31" y="1" width="1.5" height="9" fill="#fff"/><rect x="34" y="1" width="1.5" height="9" fill="#fff"/><rect x="0" y="11" width="43" height="3.5" fill="#000040" stroke="#000" stroke-width="0.8"/><rect x="8" y="14.5" width="3.5" height="11" fill="#555" stroke="#000" stroke-width="0.8"/><rect x="4" y="25" width="11.5" height="4" fill="#6a0000" stroke="#000" stroke-width="0.8"/><rect x="20" y="14.5" width="3.5" height="11" fill="#555" stroke="#000" stroke-width="0.8"/><rect x="16" y="25" width="11.5" height="4" fill="#6a0000" stroke="#000" stroke-width="0.8"/><rect x="32" y="14.5" width="3.5" height="11" fill="#555" stroke="#000" stroke-width="0.8"/><rect x="28" y="25" width="11.5" height="4" fill="#6a0000" stroke="#000" stroke-width="0.8"/></g></svg></div>
<div class="b" style="left:94px;top:954px;width:57px;height:57px;background:#000"><div class="in" style="left:2px;top:2px;width:53px;height:53px;background:#8c8c8c"></div><svg style="left:2px;top:2px;width:53px;height:53px" viewBox="0 0 53 53"><path d="M19 4 H35 L27 9 Z M19 47 H35 L27 41 Z" fill="#000"/><g transform="translate(3,14) scale(1.0,1.0)"><path d="M13.2 0 H44.3 V11 L35.7 26.3 H0 V18.8 Z" fill="#000"/><rect x="1.9" y="19.6" width="30" height="4.9" fill="#0000ff"/><path d="M34.2 19.6 L43.3 4.3 V10.4 L34.2 24.5 Z" fill="#0000ff"/><path d="M14.2 2.1 h5.5 l-1.5 4.2 h-5.5 Z" fill="url(#speck)"/><path d="M21.7 2.1 h5.5 l-1.5 4.2 h-5.5 Z" fill="url(#speck)"/><path d="M29.2 2.1 h5.5 l-1.5 4.2 h-5.5 Z" fill="url(#speck)"/><path d="M36.7 2.1 h5.5 l-1.5 4.2 h-5.5 Z" fill="url(#speck)"/><path d="M10.4 7.5 h5.5 l-1.5 4.2 h-5.5 Z" fill="url(#speck)"/><path d="M17.9 7.5 h5.5 l-1.5 4.2 h-5.5 Z" fill="url(#speck)"/><path d="M25.4 7.5 h5.5 l-1.5 4.2 h-5.5 Z" fill="url(#speck)"/><path d="M32.9 7.5 h5.5 l-1.5 4.2 h-5.5 Z" fill="url(#speck)"/><path d="M6.6 12.9 h5.5 l-1.5 4.2 h-5.5 Z" fill="url(#speck)"/><path d="M14.1 12.9 h5.5 l-1.5 4.2 h-5.5 Z" fill="url(#speck)"/><path d="M21.6 12.9 h5.5 l-1.5 4.2 h-5.5 Z" fill="url(#speck)"/><path d="M29.1 12.9 h5.5 l-1.5 4.2 h-5.5 Z" fill="url(#speck)"/></g></svg></div>
<div class="b" style="left:149px;top:954px;width:57px;height:57px;background:#000"><div class="in" style="left:2px;top:2px;width:53px;height:53px;background:#8c8c8c"></div><svg style="left:2px;top:2px;width:53px;height:53px" viewBox="0 0 53 53"><rect x="0" y="3" width="53" height="48" fill="#99959a"/><path d="M8 17 V13 Q8 8 14 8 Q20 8 20 13 V17" fill="none" stroke="#000" stroke-width="1.6"/><rect x="4" y="17" width="18" height="13" fill="#504a18" stroke="#000" stroke-width="1.4"/><rect x="8" y="20" width="2" height="8" fill="#fff"/></svg></div>
<div class="b" style="left:39px;top:1009px;width:57px;height:57px;background:#000"><div class="in" style="left:2px;top:2px;width:53px;height:53px;background:#8c8c8c"></div><svg style="left:2px;top:2px;width:53px;height:53px" viewBox="0 0 53 53"><rect x="3" y="8" width="48" height="38" fill="#99959a"/><g transform="translate(5,13) scale(1.0)"><rect x="7" y="0" width="30" height="11" fill="#000040" stroke="#000"/><rect x="26" y="1" width="3" height="9" fill="#fff"/><rect x="31" y="1" width="1.5" height="9" fill="#fff"/><rect x="34" y="1" width="1.5" height="9" fill="#fff"/><rect x="0" y="11" width="43" height="3.5" fill="#000040" stroke="#000" stroke-width="0.8"/><rect x="8" y="14.5" width="3.5" height="11" fill="#555" stroke="#000" stroke-width="0.8"/><rect x="4" y="25" width="11.5" height="4" fill="#6a0000" stroke="#000" stroke-width="0.8"/><rect x="20" y="14.5" width="3.5" height="11" fill="#555" stroke="#000" stroke-width="0.8"/><rect x="16" y="25" width="11.5" height="4" fill="#6a0000" stroke="#000" stroke-width="0.8"/><rect x="32" y="14.5" width="3.5" height="11" fill="#555" stroke="#000" stroke-width="0.8"/><rect x="28" y="25" width="11.5" height="4" fill="#6a0000" stroke="#000" stroke-width="0.8"/></g></svg></div>
<div class="b" style="left:94px;top:1009px;width:57px;height:57px;background:#000"><div class="in" style="left:2px;top:2px;width:53px;height:53px;background:#00ff00"></div><svg style="left:2px;top:2px;width:53px;height:53px" viewBox="0 0 53 53"><path d="M7 9 L14 3 V7 H20 V11 H14 V15 Z" fill="#000"/><path d="M39 8 L44 11 V24 L38 27" fill="none" stroke="#000" stroke-width="3.2"/><path d="M39 8 L44 11 V24 L38 27" fill="none" stroke="#fff" stroke-width="1.6"/><path d="M12 20 Q22 14 32 19 Z" fill="#000"/><rect x="8" y="20" width="28" height="8" fill="#0000ff" stroke="#000"/><circle cx="14" cy="29" r="2.2" fill="#000"/><circle cx="30" cy="29" r="2.2" fill="#000"/><path d="M36 26 H40" stroke="#000" stroke-width="1.5"/><rect x="3" y="25" width="4" height="9" fill="#fff" stroke="#000"/><path d="M7 30 L24 27" stroke="#000" stroke-width="3"/><path d="M7 30 L24 27" stroke="#fff" stroke-width="1.5"/><g transform="translate(12,35) scale(0.62)"><path d="M9 0 H30 V3 L24 17 H0 V13 Z" fill="#000"/><rect x="1.5" y="13" width="20" height="2.5" fill="#0000ff"/><path d="M23 15 L29 2" stroke="#0000ff" stroke-width="1.2"/><rect x="8.0" y="3.0" width="2.5" height="1.5" fill="#888"/><rect x="5.5" y="6.5" width="2.5" height="1.5" fill="#888"/><rect x="3.0" y="10.0" width="2.5" height="1.5" fill="#888"/><rect x="13.0" y="3.0" width="2.5" height="1.5" fill="#888"/><rect x="10.5" y="6.5" width="2.5" height="1.5" fill="#888"/><rect x="8.0" y="10.0" width="2.5" height="1.5" fill="#888"/><rect x="18.0" y="3.0" width="2.5" height="1.5" fill="#888"/><rect x="15.5" y="6.5" width="2.5" height="1.5" fill="#888"/><rect x="13.0" y="10.0" width="2.5" height="1.5" fill="#888"/><rect x="23.0" y="3.0" width="2.5" height="1.5" fill="#888"/><rect x="20.5" y="6.5" width="2.5" height="1.5" fill="#888"/><rect x="18.0" y="10.0" width="2.5" height="1.5" fill="#888"/></g></svg></div>
<svg style="left:1876.5px;top:29.5px;width:34px;height:19px" viewBox="0 0 34 19"><path d="M0 9.7 L7 0 V7.2 H16.1 V11.3 H7 V18.3 Z M33 9.7 L26.1 0 V7.2 H17.1 V11.3 H26.1 V18.3 Z" fill="#000"/></svg>
<svg style="left:1877.0px;top:84.8px;width:34px;height:19px" viewBox="0 0 34 19"><path d="M0 9.7 L7 0 V7.2 H16.1 V11.3 H7 V18.3 Z M33 9.7 L26.1 0 V7.2 H17.1 V11.3 H26.1 V18.3 Z" fill="#000"/></svg>
<svg style="left:1883.0px;top:129.7px;width:22px;height:42px" viewBox="0 0 22 42"><path d="M10.4 0 L21 8.8 H12.9 V19.9 H8 V8.8 H0 Z M10.4 41.1 L21 32.1 H12.9 V21.3 H8 V32.1 H0 Z" fill="#000"/></svg>
<svg style="left:1885px;top:185px;width:17px;height:43px" viewBox="0 0 17 43"><path d="M4 1 H10 V19 H4 V9 L0.7 10 V5 Z" fill="#050303"/><path d="M8.25 23 C13.2 23 15.5 27 15.5 32.5 C15.5 38 13.2 42 8.25 42 C3.3 42 1 38 1 32.5 C1 27 3.3 23 8.25 23 Z M7.35 25.6 C5.4 25.6 4.8 28.5 4.8 32.5 C4.8 36.5 5.4 39.4 7.35 39.4 C9.3 39.4 9.9 36.5 9.9 32.5 C9.9 28.5 9.3 25.6 7.35 25.6 Z" fill="#050303" fill-rule="evenodd"/></svg>
<div class="b" style="left:1819px;top:9px;width:57px;height:57px;background:#000"><div class="in" style="left:2px;top:2px;width:53px;height:53px;background:#00ff00"></div><svg style="left:2px;top:2px;width:53px;height:53px" viewBox="0 0 53 53"><g transform="translate(10,17) scale(1.0)"><path d="M4 6 C6 -0.5 25 -0.5 27 6 Z" fill="#3a0505" stroke="#000" stroke-width="1"/><rect x="0.5" y="5.5" width="31" height="9" fill="#0000ff" stroke="#000" stroke-width="1.2"/><circle cx="5.5" cy="15" r="2.6" fill="#000"/><circle cx="24.5" cy="15" r="2.6" fill="#000"/></g><circle cx="46" cy="46" r="4.5" fill="#ff6000" stroke="#000" stroke-width="1.2"/></svg></div>
<div class="b" style="left:1709px;top:64px;width:57px;height:57px;background:#000"><div class="in" style="left:2px;top:2px;width:53px;height:53px;background:#8c8c8c"></div><svg style="left:2px;top:2px;width:53px;height:53px" viewBox="0 0 53 53"><rect x="30" y="16" width="20" height="3.5" fill="#000040" stroke="#000"/><rect x="40" y="19.5" width="3" height="10" fill="#555" stroke="#000"/><rect x="38" y="28" width="10" height="4" fill="#6a0000"/><rect x="40" y="40" width="10" height="3" fill="#0000ff"/><path d="M41 38 L42.5 35 M44.5 38 L46 35 M48 38 L49 35" stroke="#000" stroke-width="0.8"/><circle cx="47" cy="47" r="4.5" fill="#333" stroke="#000" stroke-width="1.2"/></svg></div>
<div class="b" style="left:1764px;top:64px;width:57px;height:57px;background:#000"><div class="in" style="left:2px;top:2px;width:53px;height:53px;background:#8c8c8c"></div><svg style="left:2px;top:2px;width:53px;height:53px" viewBox="0 0 53 53"><rect x="20" y="5" width="30" height="43" fill="#99959a"/><g><rect x="21" y="5" width="24" height="7" fill="#000"/><rect x="23" y="7" width="20" height="3" fill="#fff"/><path d="M21.8 12 H44.5 L32 41 H21.8 Z" fill="#3a3a00" stroke="#000" stroke-width="1.6"/><path d="M22 32 L27 34 L32 42 L24 42 L22 39 Z" fill="#3a0505"/></g><g transform="translate(21,5)"><path d="M2 8 H22 L12 27 H2 Z" fill="#ff3000"/><path d="M3 9 Q8 8 12 11 T20 9 L18 14 Q12 13 8 15 T3 13 Z" fill="#ffff00"/><path d="M6 10 Q10 12 14 10 M12 12 L17 10" stroke="#0000ff" stroke-width="1.5"/><path d="M2 18 Q6 15 10 19 T17 17 L13 25 Q8 23 5 25 T2 24 Z" fill="#00c0ff"/><path d="M3 20 Q6 22 9 20 M7 23 L13 21 M4 24 H10" stroke="#00ff00" stroke-width="1.6"/><path d="M3 19 L8 21 M10 18 L15 19" stroke="#0000ff" stroke-width="1.5"/><path d="M2 15 H14" stroke="#000" stroke-width="1"/></g><path d="M4 24 L12 18 V22.5 H28 V25.5 H12 V30 Z" fill="#000"/><circle cx="7" cy="46" r="4.5" fill="#333" stroke="#000" stroke-width="1.2"/><circle cx="46.5" cy="46" r="4.5" fill="#ff6000" stroke="#000" stroke-width="1.2"/></svg></div>
<div class="b" style="left:1819px;top:64px;width:57px;height:57px;background:#000"><div class="in" style="left:2px;top:2px;width:53px;height:53px;background:#8c8c8c"></div><svg style="left:2px;top:2px;width:53px;height:53px" viewBox="0 0 53 53"><rect x="9" y="5" width="32" height="43" fill="#99959a"/><g transform="translate(12,7)"><path d="M5 0.5 H20.5 V4 L17 9 H8 L5 4 Z" fill="#3a3a00" stroke="#000" stroke-width="1"/><path d="M9 9 H17 L12 19 Z" fill="#3a3a00"/><rect x="2.5" y="9" width="3" height="27" fill="#fff" stroke="#000" stroke-width="0.8"/><rect x="17.5" y="9" width="3" height="27" fill="#fff" stroke="#000" stroke-width="0.8"/><rect x="2.5" y="9" width="18" height="3" fill="#fff" stroke="#000" stroke-width="0.8"/><rect x="2.5" y="33" width="18" height="3" fill="#fff" stroke="#000" stroke-width="0.8"/><path d="M6 15 L9 21 H6 Z" fill="#3a0505"/><rect x="5.5" y="24" width="12" height="3.5" fill="#0000ff"/><rect x="5.5" y="28.5" width="12" height="1.5" fill="#fff"/><path d="M20.5 13 L28 21 L26.5 24.5 H20.5" fill="none" stroke="#000" stroke-width="1.6"/><circle cx="6" cy="37.5" r="1.5" fill="#000"/><circle cx="17" cy="37.5" r="1.5" fill="#000"/><path d="M11.5 33 L16 37.5 L11.5 42 L7 37.5 Z" fill="#00e000"/></g></svg></div>
<div class="b" style="left:1764px;top:119px;width:57px;height:57px;background:#000"><div class="in" style="left:2px;top:2px;width:53px;height:53px;background:#8c8c8c"></div><svg style="left:2px;top:2px;width:53px;height:53px" viewBox="0 0 53 53"><path d="M4 20 H48 V48 H40 V37 H12 V48 H4 Z" fill="url(#rdots)" stroke="#000" stroke-width="1.4"/><rect x="16.5" y="30" width="21" height="16" fill="#404040" stroke="#000" stroke-width="1.4"/><rect x="25" y="23" width="3" height="7" fill="#000"/><rect x="22" y="8" width="8" height="16" rx="1" fill="#fff" stroke="#000" stroke-width="1.2"/><rect x="21" y="8" width="10" height="2" fill="#fff" stroke="#000" stroke-width="0.8"/><rect x="21" y="22" width="10" height="2" fill="#fff" stroke="#000" stroke-width="0.8"/><path d="M16 13 H22" stroke="#000"/><circle cx="49" cy="8.5" r="4.5" fill="#333" stroke="#000" stroke-width="1.2"/><circle cx="48.5" cy="44" r="4.5" fill="#ff6000" stroke="#000" stroke-width="1.2"/></svg></div>
<div class="b" style="left:1819px;top:119px;width:57px;height:57px;background:#000"><div class="in" style="left:2px;top:2px;width:53px;height:53px;background:#00ff00"></div><svg style="left:2px;top:2px;width:53px;height:53px" viewBox="0 0 53 53"><g><rect x="13" y="7" width="24" height="7" fill="#000"/><rect x="15" y="9" width="20" height="3" fill="#fff"/><path d="M13.8 14 H36.5 L24 43 H13.8 Z" fill="#3a3a00" stroke="#000" stroke-width="1.6"/><path d="M14 34 L19 36 L24 44 L16 44 L14 41 Z" fill="#3a0505"/></g><circle cx="46" cy="46" r="4.5" fill="#ff6000" stroke="#000" stroke-width="1.2"/></svg></div>
<div class="b" style="left:1709px;top:174px;width:57px;height:57px;background:#000"><div class="in" style="left:2px;top:2px;width:53px;height:53px;background:#8c8c8c"></div><svg style="left:2px;top:2px;width:53px;height:53px" viewBox="0 0 53 53"><rect x="30" y="22" width="10.5" height="7" fill="#000040"/><rect x="39" y="23" width="2" height="5" fill="#0000ff"/><path d="M45 15 Q51 24 45 33 M43 18 Q47 24 43 30" fill="none" stroke="#000" stroke-width="0.9"/></svg></div>
<div class="b" style="left:1764px;top:174px;width:57px;height:57px;background:#000"><div class="in" style="left:2px;top:2px;width:53px;height:53px;background:#8c8c8c"></div><svg style="left:2px;top:2px;width:53px;height:53px" viewBox="0 0 53 53"><rect x="5" y="3" width="43" height="47" fill="#99959a"/><path d="M14 8 Q24 0 34 8 M18 10 Q24 5 30 10 M14 44 Q24 52 34 44 M18 42 Q24 47 30 42" fill="none" stroke="#000" stroke-width="0.9"/><g transform="translate(5,12) scale(1.0)"><rect x="7" y="0" width="30" height="11" fill="#000040" stroke="#000"/><rect x="26" y="1" width="3" height="9" fill="#fff"/><rect x="31" y="1" width="1.5" height="9" fill="#fff"/><rect x="34" y="1" width="1.5" height="9" fill="#fff"/><rect x="0" y="11" width="43" height="3.5" fill="#000040" stroke="#000" stroke-width="0.8"/><rect x="8" y="14.5" width="3.5" height="11" fill="#555" stroke="#000" stroke-width="0.8"/><rect x="4" y="25" width="11.5" height="4" fill="#6a0000" stroke="#000" stroke-width="0.8"/><rect x="20" y="14.5" width="3.5" height="11" fill="#555" stroke="#000" stroke-width="0.8"/><rect x="16" y="25" width="11.5" height="4" fill="#6a0000" stroke="#000" stroke-width="0.8"/><rect x="32" y="14.5" width="3.5" height="11" fill="#555" stroke="#000" stroke-width="0.8"/><rect x="28" y="25" width="11.5" height="4" fill="#6a0000" stroke="#000" stroke-width="0.8"/></g></svg></div>
<div class="b" style="left:1819px;top:174px;width:57px;height:57px;background:#000"><div class="in" style="left:2px;top:2px;width:53px;height:53px;background:#8c8c8c"></div><svg style="left:2px;top:2px;width:53px;height:53px" viewBox="0 0 53 53"><g><rect x="6" y="6" width="24" height="7" fill="#000"/><rect x="8" y="8" width="20" height="3" fill="#fff"/><path d="M6.8 13 H29.5 L17 42 H6.8 Z" fill="#3a3a00" stroke="#000" stroke-width="1.6"/><path d="M7 33 L12 35 L17 43 L9 43 L7 40 Z" fill="#3a0505"/></g><g transform="translate(17,32)"><path d="M0.5 5 Q0.5 3 2.5 3 H7 L9 1.8 H12 L13 0.5 H20 L23 3.5 V10.5 L21 12 H11 Q9 11.5 9.5 10 Q8 9.5 8.5 8 Q7.5 7.5 7.5 6.5 H2.5 Q0.5 6.5 0.5 5 Z" fill="#404040" transform="translate(1.5,1.5)"/><path d="M0.5 5 Q0.5 3 2.5 3 H7 L9 1.8 H12 L13 0.5 H20 L23 3.5 V10.5 L21 12 H11 Q9 11.5 9.5 10 Q8 9.5 8.5 8 Q7.5 7.5 7.5 6.5 H2.5 Q0.5 6.5 0.5 5 Z" fill="#fff" stroke="#000" stroke-width="1"/><path d="M10 6.5 L14 4.5 M10.5 8.5 L15 6.5 M11.5 10.5 L16 8.5 M13 3.5 L17 6.5" stroke="#000" stroke-width="0.9" fill="none"/><rect x="24.5" y="3" width="2" height="10" fill="#404040"/><rect x="22.8" y="2" width="4.6" height="9.5" fill="#00ff00" stroke="#000" stroke-width="0.9"/><rect x="23.2" y="9" width="3.8" height="2" fill="#003000"/></g></svg></div>
<div class="b" style="left:1783px;top:310px;width:55px;height:55px;background:#8c8c8c;border:1px solid #000"></div>
<div style="left:1782px;top:309px;width:57px;height:57px"><svg style="left:2px;top:2px;width:53px;height:53px" viewBox="0 0 53 53"><text x="0.5" y="13" font-size="14.5" font-family="Liberation Sans" fill="#0a0a1a">WS</text><g transform="translate(9,13) scale(1.32)"><g transform="translate(0,0)"><rect x="0" y="6" width="26" height="4.5" fill="#404040" stroke="#000" stroke-width="0.6"/><path d="M22 4 H29 V10 L24 17 H19 L24 10 Z" fill="#404040" stroke="#000" stroke-width="0.6"/><path d="M9 0 Q6 4 7 8 Q3 12 4 18 Q6 21 9 21 Q12 21 14 18 Q15 12 11 8 Q12 4 9 0 Z" fill="#404040" stroke="#000" stroke-width="0.8"/><rect x="8" y="11" width="3.5" height="9" fill="#9a9a9a"/><path d="M2 14 H20 M19 21 H23" stroke="#555" stroke-width="0.8" stroke-dasharray="1 1"/></g></g></svg></div>
<div class="b" style="left:1838px;top:310px;width:55px;height:55px;background:#8c8c8c;border:1px solid #000"></div>
<div style="left:1837px;top:309px;width:57px;height:57px"><svg style="left:2px;top:2px;width:53px;height:53px" viewBox="0 0 53 53"><text x="0.5" y="13" font-size="14.5" font-family="Liberation Sans" fill="#0a0a1a">MAS</text><g transform="translate(9,13) scale(1.32)"><g transform="translate(0,0)"><rect x="0" y="6" width="26" height="4.5" fill="#404040" stroke="#000" stroke-width="0.6"/><path d="M22 4 H29 V10 L24 17 H19 L24 10 Z" fill="#404040" stroke="#000" stroke-width="0.6"/><path d="M9 0 Q6 4 7 8 Q3 12 4 18 Q6 21 9 21 Q12 21 14 18 Q15 12 11 8 Q12 4 9 0 Z" fill="#404040" stroke="#000" stroke-width="0.8"/><rect x="8" y="11" width="3.5" height="9" fill="#9a9a9a"/><path d="M2 14 H20 M19 21 H23" stroke="#555" stroke-width="0.8" stroke-dasharray="1 1"/></g></g></svg></div>
<div class="b" style="left:1778px;top:430px;width:66px;height:66px;background:#000"><div class="in" style="left:2px;top:2px;width:62px;height:62px;background:#8c8c8c"></div><svg style="left:2px;top:2px;width:62px;height:62px" viewBox="0 0 62 62"><path d="M7.5 29.5 H15.5 V38.5 L44 9 H54.5 L17 49 H7.5 Z" fill="#003a00" stroke="#000" stroke-width="0.8"/><path d="M7.5 40 V29.5 H11 M14 39 L44.5 9.5 H50" fill="none" stroke="#00ff00" stroke-width="2"/></svg></div>
<div class="b" style="left:1704px;top:505px;width:66px;height:66px;background:#000"><div class="in" style="left:2px;top:2px;width:62px;height:62px;background:#8c8c8c"></div><svg style="left:2px;top:2px;width:62px;height:62px" viewBox="0 0 62 62"><path d="M55 38 L60 30 H64 L58 40 Z" fill="#e0e000" stroke="#000"/></svg></div>
<div class="b" style="left:1778px;top:505px;width:66px;height:66px;background:#000"><div class="in" style="left:2px;top:2px;width:62px;height:62px;background:#8c8c8c"></div><svg style="left:2px;top:2px;width:62px;height:62px" viewBox="0 0 62 62"><path d="M15 6 L21.5 13 H17 V22 H13 V13 H8.5 Z" fill="#000"/><path d="M41 6 V20 M37 15 L41 20 L45 15" stroke="#9a9a9a" stroke-width="2" fill="none"/><rect x="7" y="28" width="42" height="4" fill="#fff" stroke="#000" stroke-width="1"/><rect x="4" y="36" width="48" height="4" fill="#fff" stroke="#000" stroke-width="1"/><rect x="8" y="40" width="3.5" height="11" fill="#fff" stroke="#000"/><rect x="42" y="40" width="3.5" height="11" fill="#fff" stroke="#000"/><rect x="44" y="31" width="3" height="6" fill="#fff" stroke="#000"/><path d="M20 41 Q26 34 33 41 V43 H20 Z" fill="#404040" stroke="#000"/><path d="M19 22 H44 L37 40 H13 Z" fill="#ffff00" stroke="#000" stroke-width="1.5"/><rect x="22" y="25" width="6" height="6" fill="#404040" stroke="#000"/><rect x="27" y="30" width="6" height="6" fill="#404040" stroke="#000"/></svg></div>
<div style="left:1852px;top:509px;width:56px;height:55px;border-top:2px solid #fff;border-left:2px solid #fff;border-right:2px solid #5e5e5e;border-bottom:2px solid #5e5e5e"></div>
<svg style="left:1852px;top:509px;width:56px;height:55px" viewBox="0 0 56 55"><ellipse cx="27.5" cy="27.5" rx="16" ry="8.5" fill="#fff" stroke="#222" stroke-width="0.8"/><text x="27.5" y="33" font-size="15" font-weight="bold" font-family="Liberation Sans" fill="#000" text-anchor="middle">D</text></svg>
<div class="b" style="left:1704px;top:580px;width:66px;height:66px;background:#000"><div class="in" style="left:2px;top:2px;width:62px;height:62px;background:#00ff00"></div><svg style="left:2px;top:2px;width:62px;height:62px" viewBox="0 0 62 62"><circle cx="60" cy="37" r="3.5" fill="#3a0505"/></svg></div>
<div class="b" style="left:1778px;top:580px;width:66px;height:66px;background:#000"><div class="in" style="left:2px;top:2px;width:62px;height:62px;background:#00ff00"></div><svg style="left:2px;top:2px;width:62px;height:62px" viewBox="0 0 62 62"><g transform="translate(15,13)"><path d="M0.5 5 Q0.5 3 2.5 3 H7 L9 1.8 H12 L13 0.5 H20 L23 3.5 V10.5 L21 12 H11 Q9 11.5 9.5 10 Q8 9.5 8.5 8 Q7.5 7.5 7.5 6.5 H2.5 Q0.5 6.5 0.5 5 Z" fill="#404040" transform="translate(1.5,1.5)"/><path d="M0.5 5 Q0.5 3 2.5 3 H7 L9 1.8 H12 L13 0.5 H20 L23 3.5 V10.5 L21 12 H11 Q9 11.5 9.5 10 Q8 9.5 8.5 8 Q7.5 7.5 7.5 6.5 H2.5 Q0.5 6.5 0.5 5 Z" fill="#fff" stroke="#000" stroke-width="1"/><path d="M10 6.5 L14 4.5 M10.5 8.5 L15 6.5 M11.5 10.5 L16 8.5 M13 3.5 L17 6.5" stroke="#000" stroke-width="0.9" fill="none"/><rect x="24.5" y="3" width="2" height="10" fill="#404040"/><rect x="22.8" y="2" width="4.6" height="9.5" fill="#00a000" stroke="#000" stroke-width="0.9"/><rect x="23.2" y="9" width="3.8" height="2" fill="#003000"/></g><g transform="translate(19,29)"><path d="M7 0 H28 L22 10 H1 Z" fill="#d8b040" stroke="#000" stroke-width="1"/><path d="M1 10 H22 V13 H1 Z" fill="#d8b040" stroke="#000" stroke-width="1"/><path d="M22 10 L28 0 V3 L22 13" fill="#000"/><path d="M3 13 H24 L28 5 V8 L24 16 H3 Z" fill="#d8b040" stroke="#000" stroke-width="1"/><path d="M7 0 H28 L22 10 H1 Z" fill="url(#dots)"/></g></svg></div>
<div class="b" style="left:1704px;top:650px;width:66px;height:66px;background:#000"><div class="in" style="left:2px;top:2px;width:62px;height:62px;background:#8c8c8c"></div><svg style="left:2px;top:2px;width:62px;height:62px" viewBox="0 0 62 62"><circle cx="60" cy="36" r="3.5" fill="#3a0505"/></svg></div>
<div class="b" style="left:1778px;top:650px;width:66px;height:66px;background:#000"><div class="in" style="left:2px;top:2px;width:62px;height:62px;background:#8c8c8c"></div><svg style="left:2px;top:2px;width:62px;height:62px" viewBox="0 0 62 62"><g transform="translate(23,9) scale(0.62)"><path d="M8 45 Q3 40 2 33 L0 20 Q0 16 3 17 L8 26 L7 6 Q7 3 10 3 L12 4 L13 1 Q15 -1 18 1 L19 3 Q22 1 24 3 L25 7 Q28 6 29 9 L30 30 Q30 40 25 46 Z" fill="#3a3a3a" transform="translate(1.5,1.5)"/><path d="M8 45 Q3 40 2 33 L0 20 Q0 16 3 17 L8 26 L7 6 Q7 3 10 3 L12 4 L13 1 Q15 -1 18 1 L19 3 Q22 1 24 3 L25 7 Q28 6 29 9 L30 30 Q30 40 25 46 Z" fill="#fff" stroke="#000" stroke-width="1.3"/><path d="M26 9.5 L28.3 9.5 L28.8 30 Q28.8 39 24.3 44.5 L20 44.5 Q25.5 38 25.8 30 Z" fill="#3c3c3c"/><path d="M12.2 4.5 V23 M19 3 V22 M24.6 7.5 V24" stroke="#333" stroke-width="2.3" fill="none"/><path d="M5 21.5 L13.5 32.5" stroke="#333" stroke-width="2.2" fill="none"/><path d="M9 41.5 Q16 45 22 42.5" stroke="#3c3c3c" stroke-width="2.4" fill="none"/></g><g transform="translate(19,34)"><path d="M7 0 H28 L22 10 H1 Z" fill="#d8b040" stroke="#000" stroke-width="1"/><path d="M1 10 H22 V13 H1 Z" fill="#d8b040" stroke="#000" stroke-width="1"/><path d="M22 10 L28 0 V3 L22 13" fill="#000"/><path d="M3 13 H24 L28 5 V8 L24 16 H3 Z" fill="#d8b040" stroke="#000" stroke-width="1"/><path d="M7 0 H28 L22 10 H1 Z" fill="url(#dots)"/></g></svg></div>
<div class="b" style="left:1859px;top:659px;width:57px;height:57px;background:#000"><div class="in" style="left:2px;top:2px;width:53px;height:53px;background:#8c8c8c"></div><svg style="left:2px;top:2px;width:53px;height:53px" viewBox="0 0 53 53"><g transform="translate(17,22)"><path d="M7 0 H28 L22 10 H1 Z" fill="#d8b040" stroke="#000" stroke-width="1"/><path d="M1 10 H22 V13 H1 Z" fill="#d8b040" stroke="#000" stroke-width="1"/><path d="M22 10 L28 0 V3 L22 13" fill="#000"/><path d="M3 13 H24 L28 5 V8 L24 16 H3 Z" fill="#d8b040" stroke="#000" stroke-width="1"/><path d="M7 0 H28 L22 10 H1 Z" fill="url(#dots)"/></g><path d="M10 14 Q10 7 19 7 Q28 7 28 15 Q28 21 21 23 V27 H15 V20 Q22 19 22 15 Q22 12 19 12 Q16 12 16 15 Z" fill="#ffff00" stroke="#000" stroke-width="1.2"/><rect x="15" y="29" width="6" height="6" fill="#ffff00" stroke="#000" stroke-width="1.2"/></svg></div>
<div class="b" style="left:1749px;top:724px;width:57px;height:57px;background:#000"><div class="in" style="left:2px;top:2px;width:53px;height:53px;background:#8c8c8c"></div><svg style="left:2px;top:2px;width:53px;height:53px" viewBox="0 0 53 53"><path d="M13 16 Q24 3 36 16 Z" fill="#ffff00" stroke="#000" stroke-width="1"/><rect x="17" y="16" width="2" height="2" fill="#000"/><rect x="23" y="16" width="2" height="2" fill="#000"/><rect x="29" y="16" width="2" height="2" fill="#000"/><path d="M19 19.0 Q21.4 22 20.8 23.2 Q19 25.0 17.2 23.2 Q16.6 22 19 19.0 Z" fill="#0000ff"/><path d="M27 22.0 Q29.4 25 28.8 26.2 Q27 28.0 25.2 26.2 Q24.6 25 27 22.0 Z" fill="#0000ff"/><path d="M33 19.0 Q35.4 22 34.8 23.2 Q33 25.0 31.2 23.2 Q30.6 22 33 19.0 Z" fill="#0000ff"/><path d="M22 26.0 Q24.4 29 23.8 30.2 Q22 32.0 20.2 30.2 Q19.6 29 22 26.0 Z" fill="#0000ff"/><path d="M33 26.0 Q35.4 29 34.8 30.2 Q33 32.0 31.2 30.2 Q30.6 29 33 26.0 Z" fill="#0000ff"/><path d="M15 33 L19 30 H38 V37 L34 40 H15 Z" fill="#404040" stroke="#000" stroke-width="1.2"/><path d="M15 33 H34 V40 M34 33 L38 30" stroke="#000" fill="none"/></svg></div>
<div class="b" style="left:1804px;top:724px;width:57px;height:57px;background:#000"><div class="in" style="left:2px;top:2px;width:53px;height:53px;background:#8c8c8c"></div><svg style="left:2px;top:2px;width:53px;height:53px" viewBox="0 0 53 53"><rect x="14" y="11" width="26" height="28" fill="#99959a"/><path d="M20 11 Q24 16 23 18 Q20 21 17 18 Q16 16 20 11 Z" fill="#0000ff"/><path d="M35 11 Q39 16 38 18 Q35 21 32 18 Q31 16 35 11 Z" fill="#0000ff"/><path d="M28 17.0 Q32.8 23 31.6 25.4 Q28 29.0 24.4 25.4 Q23.2 23 28 17.0 Z" fill="#0000ff"/><path d="M19 25 Q23 30 22 32 Q19 35 16 32 Q15 30 19 25 Z" fill="#0000ff"/><path d="M35 27 Q39 32 38 34 Q35 37 32 34 Q31 32 35 27 Z" fill="#0000ff"/></svg></div>
<div class="b" style="left:1859px;top:724px;width:57px;height:57px;background:#000"><div class="in" style="left:2px;top:2px;width:53px;height:53px;background:#8c8c8c"></div><svg style="left:2px;top:2px;width:53px;height:53px" viewBox="0 0 53 53"><rect x="10" y="8" width="8" height="15" fill="#ffff00" stroke="#000" stroke-width="1.2"/><path d="M18 7 H21 Q27 7 27 15 Q27 23 21 23 H18 Z" fill="#ff0000" stroke="#000" stroke-width="1.2"/><rect x="23.5" y="24.5" width="4" height="21" fill="#ffff00" stroke="#000" stroke-width="1"/><rect x="38.5" y="15" width="4" height="21" fill="#ffff00" stroke="#000" stroke-width="1"/><path d="M28 33 L38 20 M28 39 L38 27 M28 44 L38 33" stroke="#ff0000" stroke-width="1.6"/></svg></div>
<svg style="left:1878.0px;top:809.5px;width:34px;height:19px" viewBox="0 0 34 19"><path d="M0 9.7 L7 0 V7.2 H16.1 V11.3 H7 V18.3 Z M33 9.7 L26.1 0 V7.2 H17.1 V11.3 H26.1 V18.3 Z" fill="#000"/></svg>
<svg style="left:1885px;top:853px;width:17px;height:43px" viewBox="0 0 17 43"><path d="M4 1 H10 V19 H4 V9 L0.7 10 V5 Z" fill="#050303"/><path d="M8.25 23 C13.2 23 15.5 27 15.5 32.5 C15.5 38 13.2 42 8.25 42 C3.3 42 1 38 1 32.5 C1 27 3.3 23 8.25 23 Z M7.35 25.6 C5.4 25.6 4.8 28.5 4.8 32.5 C4.8 36.5 5.4 39.4 7.35 39.4 C9.3 39.4 9.9 36.5 9.9 32.5 C9.9 28.5 9.3 25.6 7.35 25.6 Z" fill="#050303" fill-rule="evenodd"/></svg>
<svg style="left:1883.0px;top:905.0px;width:22px;height:42px" viewBox="0 0 22 42"><path d="M10.4 0 L21 8.8 H12.9 V19.9 H8 V8.8 H0 Z M10.4 41.1 L21 32.1 H12.9 V21.3 H8 V32.1 H0 Z" fill="#000"/></svg>
<svg style="left:1883.0px;top:961.0px;width:22px;height:42px" viewBox="0 0 22 42"><path d="M10.4 0 L21 8.8 H12.9 V19.9 H8 V8.8 H0 Z M10.4 41.1 L21 32.1 H12.9 V21.3 H8 V32.1 H0 Z" fill="#000"/></svg>
<svg style="left:1883.0px;top:1018.0px;width:22px;height:42px" viewBox="0 0 22 42"><path d="M10.4 0 L21 8.8 H12.9 V19.9 H8 V8.8 H0 Z M10.4 41.1 L21 32.1 H12.9 V21.3 H8 V32.1 H0 Z" fill="#000"/></svg>
<div class="b" style="left:1709px;top:789px;width:57px;height:57px;background:#000"><div class="in" style="left:2px;top:2px;width:53px;height:53px;background:#8c8c8c"></div><svg style="left:2px;top:2px;width:53px;height:53px" viewBox="0 0 53 53"><circle cx="48" cy="36" r="3.5" fill="#3a0505" stroke="#000"/><rect x="40" y="33" width="8" height="6" fill="#fff" stroke="#000"/></svg></div>
<div class="b" style="left:1764px;top:789px;width:57px;height:57px;background:#000"><div class="in" style="left:2px;top:2px;width:53px;height:53px;background:#8c8c8c"></div><svg style="left:2px;top:2px;width:53px;height:53px" viewBox="0 0 53 53"><text x="19" y="24.5" font-size="19" font-family="Liberation Sans" fill="#5a0000">3</text><rect x="15" y="27.5" width="20" height="5" fill="#555" stroke="#000"/><path d="M19 28 V32 M23 28 V32 M27 28 V32 M31 28 V32" stroke="#000" stroke-width="0.8"/><rect x="13" y="32.5" width="24" height="2" fill="#ffff00" stroke="#000" stroke-width="0.6"/><rect x="8" y="34.5" width="34" height="5.5" fill="#e8e8e8" stroke="#000" stroke-width="1.2"/><circle cx="8" cy="37" r="3" fill="#5a0505" stroke="#000"/><circle cx="42" cy="37" r="3" fill="#5a0505" stroke="#000"/></svg></div>
<div class="b" style="left:1819px;top:789px;width:57px;height:57px;background:#000"><div class="in" style="left:2px;top:2px;width:53px;height:53px;background:#8c8c8c"></div><svg style="left:2px;top:2px;width:53px;height:53px" viewBox="0 0 53 53"><path d="M4 46 L12 30 H33 L25 46 Z" fill="url(#rdots)" stroke="#000" stroke-width="1.2"/><path d="M4 46 H25 V48 H4Z" fill="#000"/><path d="M13 30 L25 5 M26 46 L44 8" stroke="#000" stroke-width="1.2"/><path d="M20 32 L36 9" stroke="#000" stroke-width="1.5"/><path d="M18 30 L21 24 L24 30 Z M37 8 L32 10 L36 13 Z" fill="#000"/><circle cx="45" cy="6" r="4.5" fill="#333" stroke="#000" stroke-width="1.2"/><circle cx="44" cy="45" r="4.5" fill="#ff6000" stroke="#000" stroke-width="1.2"/></svg></div>
<div class="b" style="left:1709px;top:844px;width:57px;height:57px;background:#000"><div class="in" style="left:2px;top:2px;width:53px;height:53px;background:#8c8c8c"></div><svg style="left:2px;top:2px;width:53px;height:53px" viewBox="0 0 53 53"><circle cx="48" cy="36" r="3.5" fill="#3a0505" stroke="#000"/></svg></div>
<div class="b" style="left:1764px;top:844px;width:57px;height:57px;background:#000"><div class="in" style="left:2px;top:2px;width:53px;height:53px;background:#8c8c8c"></div><svg style="left:2px;top:2px;width:53px;height:53px" viewBox="0 0 53 53"><path d="M7 11 H16 V7 L23 13 L16 19 V15 H7 Z M23 25 H14 V29 L7 23 L14 17 V21 H23 Z" fill="#000"/><path d="M20 35 L28 21 V12 L20 26 Z M29 33 L37 19 V10 L29 24 Z M38 31 L46 17 V8 L38 22 Z" fill="#2a5a5a" stroke="#000" stroke-width="0.8"/><g transform="translate(8,28.5) scale(0.8,0.65)"><path d="M13.2 0 H44.3 V11 L35.7 26.3 H0 V18.8 Z" fill="#000"/><rect x="1.9" y="19.6" width="30" height="4.9" fill="#0000ff"/><path d="M34.2 19.6 L43.3 4.3 V10.4 L34.2 24.5 Z" fill="#0000ff"/><path d="M14.2 2.1 h5.5 l-1.5 4.2 h-5.5 Z" fill="url(#speck)"/><path d="M21.7 2.1 h5.5 l-1.5 4.2 h-5.5 Z" fill="url(#speck)"/><path d="M29.2 2.1 h5.5 l-1.5 4.2 h-5.5 Z" fill="url(#speck)"/><path d="M36.7 2.1 h5.5 l-1.5 4.2 h-5.5 Z" fill="url(#speck)"/><path d="M10.4 7.5 h5.5 l-1.5 4.2 h-5.5 Z" fill="url(#speck)"/><path d="M17.9 7.5 h5.5 l-1.5 4.2 h-5.5 Z" fill="url(#speck)"/><path d="M25.4 7.5 h5.5 l-1.5 4.2 h-5.5 Z" fill="url(#speck)"/><path d="M32.9 7.5 h5.5 l-1.5 4.2 h-5.5 Z" fill="url(#speck)"/><path d="M6.6 12.9 h5.5 l-1.5 4.2 h-5.5 Z" fill="url(#speck)"/><path d="M14.1 12.9 h5.5 l-1.5 4.2 h-5.5 Z" fill="url(#speck)"/><path d="M21.6 12.9 h5.5 l-1.5 4.2 h-5.5 Z" fill="url(#speck)"/><path d="M29.1 12.9 h5.5 l-1.5 4.2 h-5.5 Z" fill="url(#speck)"/></g><circle cx="5" cy="4" r="4.5" fill="#333" stroke="#000" stroke-width="1.2"/><circle cx="45" cy="4" r="4.5" fill="#333" stroke="#000" stroke-width="1.2"/></svg></div>
<div class="b" style="left:1819px;top:844px;width:57px;height:57px;background:#000"><div class="in" style="left:2px;top:2px;width:53px;height:53px;background:#8c8c8c"></div><svg style="left:2px;top:2px;width:53px;height:53px" viewBox="0 0 53 53"><rect x="0" y="0" width="53" height="53" fill="#99959a"/><rect x="4" y="3.5" width="21.5" height="11" fill="#0000ff" stroke="#000" stroke-width="1"/><text x="6" y="13" font-size="12" font-weight="bold" font-family="Liberation Sans" fill="#fff">1.2</text><text x="31" y="13.5" font-size="11.5" font-family="Liberation Sans" fill="#5a0000" letter-spacing="0.6">mm</text><path d="M9 21 L14 26.5 H10.8 V36.5 H14 L9 42 L4 36.5 H7.2 V26.5 H4 Z" fill="#3a0505"/><g transform="translate(16,15.5) scale(0.85)"><g transform="translate(0,0)"><path d="M5 0.5 H20.5 V4 L17 9 H8 L5 4 Z" fill="#3a0505" stroke="#000" stroke-width="1"/><path d="M9 9 H17 L12 19 Z" fill="#3a0505"/><rect x="2.5" y="9" width="3" height="27" fill="#fff" stroke="#000" stroke-width="0.8"/><rect x="17.5" y="9" width="3" height="27" fill="#fff" stroke="#000" stroke-width="0.8"/><rect x="2.5" y="9" width="18" height="3" fill="#fff" stroke="#000" stroke-width="0.8"/><rect x="2.5" y="33" width="18" height="3" fill="#fff" stroke="#000" stroke-width="0.8"/><path d="M6 15 L9 21 H6 Z" fill="#3a0505"/><rect x="5.5" y="24" width="12" height="3.5" fill="#0000ff"/><rect x="5.5" y="28.5" width="12" height="1.5" fill="#fff"/><path d="M20.5 13 L28 21 L26.5 24.5 H20.5" fill="none" stroke="#000" stroke-width="1.6"/><circle cx="6" cy="37.5" r="1.5" fill="#000"/><circle cx="17" cy="37.5" r="1.5" fill="#000"/></g></g></svg></div>
<div class="b" style="left:1709px;top:899px;width:57px;height:57px;background:#000"><div class="in" style="left:2px;top:2px;width:53px;height:53px;background:#8c8c8c"></div><svg style="left:2px;top:2px;width:53px;height:53px" viewBox="0 0 53 53"><rect x="40" y="5" width="13" height="6" fill="#404040" stroke="#000"/><rect x="40" y="11" width="13" height="8" fill="#0a3a3a" stroke="#000"/><path d="M45 22 L50 28 H47 V40 H43 V28 H40Z" fill="#000"/><circle cx="47" cy="47" r="4.5" fill="#ff6000" stroke="#000" stroke-width="1.2"/></svg></div>
<div class="b" style="left:1764px;top:899px;width:57px;height:57px;background:#000"><div class="in" style="left:2px;top:2px;width:53px;height:53px;background:#8c8c8c"></div><svg style="left:2px;top:2px;width:53px;height:53px" viewBox="0 0 53 53"><rect x="3" y="3" width="47" height="47" fill="#99959a"/><g transform="translate(37,5) scale(-1,1)"><path d="M5 0.5 H20.5 V4 L17 9 H8 L5 4 Z" fill="#3a0505" stroke="#000" stroke-width="1"/><path d="M9 9 H17 L12 19 Z" fill="#3a0505"/><rect x="2.5" y="9" width="3" height="27" fill="#fff" stroke="#000" stroke-width="0.8"/><rect x="17.5" y="9" width="3" height="27" fill="#fff" stroke="#000" stroke-width="0.8"/><rect x="2.5" y="9" width="18" height="3" fill="#fff" stroke="#000" stroke-width="0.8"/><rect x="2.5" y="33" width="18" height="3" fill="#fff" stroke="#000" stroke-width="0.8"/><path d="M6 15 L9 21 H6 Z" fill="#3a0505"/><rect x="5.5" y="24" width="12" height="3.5" fill="#0000ff"/><rect x="5.5" y="28.5" width="12" height="1.5" fill="#fff"/><path d="M20.5 13 L28 21 L26.5 24.5 H20.5" fill="none" stroke="#000" stroke-width="1.6"/><circle cx="6" cy="37.5" r="1.5" fill="#000"/><circle cx="17" cy="37.5" r="1.5" fill="#000"/></g><text x="40" y="34" font-size="11" font-family="Liberation Sans" fill="#000">1</text></svg></div>
<div class="b" style="left:1819px;top:899px;width:57px;height:57px;background:#000"><div class="in" style="left:2px;top:2px;width:53px;height:53px;background:#8c8c8c"></div><svg style="left:2px;top:2px;width:53px;height:53px" viewBox="0 0 53 53"><g transform="translate(37,5) scale(-1,1)"><path d="M5 0.5 H20.5 V4 L17 9 H8 L5 4 Z" fill="#3a0505" stroke="#000" stroke-width="1"/><path d="M9 9 H17 L12 19 Z" fill="#3a0505"/><rect x="2.5" y="9" width="3" height="27" fill="#fff" stroke="#000" stroke-width="0.8"/><rect x="17.5" y="9" width="3" height="27" fill="#fff" stroke="#000" stroke-width="0.8"/><rect x="2.5" y="9" width="18" height="3" fill="#fff" stroke="#000" stroke-width="0.8"/><rect x="2.5" y="33" width="18" height="3" fill="#fff" stroke="#000" stroke-width="0.8"/><path d="M6 15 L9 21 H6 Z" fill="#3a0505"/><rect x="5.5" y="24" width="12" height="3.5" fill="#0000ff"/><rect x="5.5" y="28.5" width="12" height="1.5" fill="#fff"/><path d="M20.5 13 L28 21 L26.5 24.5 H20.5" fill="none" stroke="#000" stroke-width="1.6"/><circle cx="6" cy="37.5" r="1.5" fill="#000"/><circle cx="17" cy="37.5" r="1.5" fill="#000"/></g><text x="40" y="34" font-size="11" font-family="Liberation Sans" fill="#000">2</text></svg></div>
<div class="b" style="left:1764px;top:954px;width:57px;height:57px;background:#000"><div class="in" style="left:2px;top:2px;width:53px;height:53px;background:#8c8c8c"></div><svg style="left:2px;top:2px;width:53px;height:53px" viewBox="0 0 53 53"><g transform="translate(7,17) scale(1.05)"><path d="M4 6 C6 -0.5 25 -0.5 27 6 Z" fill="#3a0505" stroke="#000" stroke-width="1"/><rect x="0.5" y="5.5" width="31" height="9" fill="#0000ff" stroke="#000" stroke-width="1.2"/><circle cx="5.5" cy="15" r="2.6" fill="#000"/><circle cx="24.5" cy="15" r="2.6" fill="#000"/></g><path d="M40 30 H43" stroke="#000"/><rect x="42" y="28" width="5" height="5" fill="#ffff00" stroke="#000"/></svg></div>
<div class="b" style="left:1819px;top:954px;width:57px;height:57px;background:#000"><div class="in" style="left:2px;top:2px;width:53px;height:53px;background:#8c8c8c"></div><svg style="left:2px;top:2px;width:53px;height:53px" viewBox="0 0 53 53"><path d="M5 28 V10 L12 6" fill="none" stroke="#000" stroke-width="3.2"/><path d="M5 28 V10 L12 6" fill="none" stroke="#fff" stroke-width="1.6"/><path d="M33 9 H40 V5 L46 11 L40 17 V13 H33 Z" fill="#000"/><path d="M16 21 Q26 13 36 21 Z" fill="#3a0505" stroke="#000"/><rect x="13" y="21" width="28" height="8" fill="#0000ff" stroke="#000"/><circle cx="18" cy="31" r="2.2" fill="#000"/><path d="M5 29 L13 28" stroke="#0000ff" stroke-width="1.5"/><rect x="41" y="22" width="4" height="10" fill="#fff" stroke="#000"/><path d="M23 24 L41 27" stroke="#000" stroke-width="3"/><path d="M23 24 L41 27" stroke="#fff" stroke-width="1.5"/><g transform="translate(16,35) scale(0.64)"><path d="M9 0 H30 V3 L24 17 H0 V13 Z" fill="#000"/><rect x="1.5" y="13" width="20" height="2.5" fill="#0000ff"/><path d="M23 15 L29 2" stroke="#0000ff" stroke-width="1.2"/><rect x="8.0" y="3.0" width="2.5" height="1.5" fill="#888"/><rect x="5.5" y="6.5" width="2.5" height="1.5" fill="#888"/><rect x="3.0" y="10.0" width="2.5" height="1.5" fill="#888"/><rect x="13.0" y="3.0" width="2.5" height="1.5" fill="#888"/><rect x="10.5" y="6.5" width="2.5" height="1.5" fill="#888"/><rect x="8.0" y="10.0" width="2.5" height="1.5" fill="#888"/><rect x="18.0" y="3.0" width="2.5" height="1.5" fill="#888"/><rect x="15.5" y="6.5" width="2.5" height="1.5" fill="#888"/><rect x="13.0" y="10.0" width="2.5" height="1.5" fill="#888"/><rect x="23.0" y="3.0" width="2.5" height="1.5" fill="#888"/><rect x="20.5" y="6.5" width="2.5" height="1.5" fill="#888"/><rect x="18.0" y="10.0" width="2.5" height="1.5" fill="#888"/></g></svg></div>
<div class="b" style="left:1709px;top:1009px;width:57px;height:57px;background:#000"><div class="in" style="left:2px;top:2px;width:53px;height:53px;background:#8c8c8c"></div><svg style="left:2px;top:2px;width:53px;height:53px" viewBox="0 0 53 53"><rect x="0" y="3" width="53" height="48" fill="#99959a"/><rect x="6" y="9" width="5" height="15" fill="#fff" stroke="#000"/><rect x="5" y="8" width="7" height="2" fill="#404040"/><rect x="7.5" y="24" width="2" height="12" fill="#000"/><g transform="translate(19,15) scale(1.0)"><path d="M8 0.5 H29.5 V3 L21.5 22.5 H0.5 V20 Z" fill="#000"/><path d="M9 1.5 H28 L20 19 H1.5 Z" fill="#e0c030"/><rect x="1.5" y="20" width="19" height="1.5" fill="#e0c030"/><path d="M9 1.5 H28 L20 19 H1.5 Z" fill="url(#dots)"/></g><path d="M3 36 Q10 33 20 37" stroke="#fff" stroke-width="2" fill="none"/><circle cx="9" cy="37" r="2.5" fill="#fff" stroke="#000"/><circle cx="5" cy="45.5" r="4.5" fill="#ff6000" stroke="#000" stroke-width="1.2"/><circle cx="22.5" cy="45.5" r="4.5" fill="#333" stroke="#000" stroke-width="1.2"/></svg></div>
<div class="b" style="left:1764px;top:1009px;width:57px;height:57px;background:#000"><div class="in" style="left:2px;top:2px;width:53px;height:53px;background:#8c8c8c"></div><svg style="left:2px;top:2px;width:53px;height:53px" viewBox="0 0 53 53"><path d="M9 7 L14 13 H11 V26 H14 L9 32 L4 26 H7 V13 H4 Z" fill="#000050"/><g transform="translate(17,16) scale(0.95)"><path d="M4 6 C6 -0.5 25 -0.5 27 6 Z" fill="#3a0505" stroke="#000" stroke-width="1"/><rect x="0.5" y="5.5" width="31" height="9" fill="#0000ff" stroke="#000" stroke-width="1.2"/><circle cx="5.5" cy="15" r="2.6" fill="#000"/><circle cx="24.5" cy="15" r="2.6" fill="#000"/></g><rect x="14" y="30" width="32" height="3" fill="#fff" stroke="#000" stroke-width="0.8"/><circle cx="45.5" cy="6.5" r="4.5" fill="#ff6000" stroke="#000" stroke-width="1.2"/><circle cx="45.5" cy="45.5" r="4.5" fill="#333" stroke="#000" stroke-width="1.2"/></svg></div>
<div class="b" style="left:1819px;top:1009px;width:57px;height:57px;background:#000"><div class="in" style="left:2px;top:2px;width:53px;height:53px;background:#00ff00"></div><svg style="left:2px;top:2px;width:53px;height:53px" viewBox="0 0 53 53"><g transform="translate(3,12) scale(1.0,1.0)"><path d="M13.2 0 H44.3 V11 L35.7 26.3 H0 V18.8 Z" fill="#000"/><rect x="1.9" y="19.6" width="30" height="4.9" fill="#0000ff"/><path d="M34.2 19.6 L43.3 4.3 V10.4 L34.2 24.5 Z" fill="#0000ff"/><path d="M14.2 2.1 h5.5 l-1.5 4.2 h-5.5 Z" fill="url(#speck)"/><path d="M21.7 2.1 h5.5 l-1.5 4.2 h-5.5 Z" fill="url(#speck)"/><path d="M29.2 2.1 h5.5 l-1.5 4.2 h-5.5 Z" fill="url(#speck)"/><path d="M36.7 2.1 h5.5 l-1.5 4.2 h-5.5 Z" fill="url(#speck)"/><path d="M10.4 7.5 h5.5 l-1.5 4.2 h-5.5 Z" fill="url(#speck)"/><path d="M17.9 7.5 h5.5 l-1.5 4.2 h-5.5 Z" fill="url(#speck)"/><path d="M25.4 7.5 h5.5 l-1.5 4.2 h-5.5 Z" fill="url(#speck)"/><path d="M32.9 7.5 h5.5 l-1.5 4.2 h-5.5 Z" fill="url(#speck)"/><path d="M6.6 12.9 h5.5 l-1.5 4.2 h-5.5 Z" fill="url(#speck)"/><path d="M14.1 12.9 h5.5 l-1.5 4.2 h-5.5 Z" fill="url(#speck)"/><path d="M21.6 12.9 h5.5 l-1.5 4.2 h-5.5 Z" fill="url(#speck)"/><path d="M29.1 12.9 h5.5 l-1.5 4.2 h-5.5 Z" fill="url(#speck)"/></g></svg></div>
<svg style="left:1894px;top:912px;width:26px;height:56px" viewBox="0 0 26 56"><path d="M26 0 H8 Q2 0 2 6 V40 L26 56 Z" fill="#2a2a2a"/><rect x="5" y="4" width="21" height="22" fill="#0a1630"/><circle cx="16.5" cy="15" r="8.5" fill="none" stroke="#1e3a70" stroke-width="1.5"/><path d="M10 15 H23 M10 15 L13 12 M10 15 L13 18 M23 15 L20 12 M23 15 L20 18" stroke="#1e3a70" stroke-width="1.4"/></svg>
<div style="left:270px;top:5px;width:1375px;height:60px;background:#8a8a8a"></div>
<div style="left:275px;top:8px;width:1366px;height:60px;border-top:2px solid #fff;border-left:2px solid #fff;border-right:1px solid #000"></div>
<svg style="left:287px;top:17px;width:30px;height:32px" viewBox="0 0 30 32"><g transform="translate(0.5,1)"><circle cx="14.5" cy="17" r="13.5" fill="#fff" stroke="#000" stroke-width="1.8"/><ellipse cx="14" cy="1.8" rx="3" ry="1.8" fill="#fff" stroke="#000"/><ellipse cx="2.8" cy="6.3" rx="2.2" ry="2" fill="#fff" stroke="#000"/><ellipse cx="26.5" cy="6.3" rx="2.2" ry="2" fill="#fff" stroke="#000"/><path d="M14 17 L7 10 M14.5 17 V11 M14.5 17 L10 22" stroke="#000" stroke-width="1"/><path d="M14.5 17 L10 22" stroke="#ff0000"/><rect x="13" y="15.5" width="3" height="3" fill="#000"/><g fill="#ff0000"><rect x="14" y="6" width="1" height="1"/><rect x="8.5" y="7.5" width="1" height="1"/><rect x="20" y="7.5" width="1" height="1"/><rect x="5" y="12" width="1" height="1"/><rect x="23.5" y="12" width="1" height="1"/><rect x="3" y="17" width="1" height="1"/><rect x="25.5" y="17" width="1" height="1"/></g></g></svg>
<div class="t" style="left:325px;top:28px;font-size:19px;font-weight:bold;color:#3a0000;transform:scaleX(0.78);transform-origin:0 0">20.5</div>
<div class="t" style="left:358px;top:28px;font-size:19px;font-weight:bold;color:#3a0000;transform:scaleX(0.8);transform-origin:0 0">s</div>
<svg style="left:380px;top:14px;width:22px;height:30px" viewBox="0 0 22 30"><rect x="1.5" y="1.5" width="6" height="28" fill="#ffff00" stroke="#000" stroke-width="1.2"/><path d="M2 4 H6 M2 8 H5 M2 12 H5 M2 16 H6 M2 20 H5 M2 24 H5" stroke="#000" stroke-width="1.2"/><path d="M9 24 L20 18 V30 Z" fill="#ff0000" stroke="#000" stroke-width="0.8"/></svg>
<div class="t" style="left:409px;top:28px;font-size:19px;font-weight:bold;color:#101010;transform:scaleX(0.72);transform-origin:0 0">39.6</div>
<div class="t" style="left:444px;top:28px;font-size:19px;font-weight:bold;color:#000;transform:scaleX(0.72);transform-origin:0 0">mm</div>
<div class="t" style="left:489px;top:15px;font-size:14px;font-weight:bold;color:#101010">3,20&nbsp;&nbsp;s</div>
<svg style="left:485px;top:31px;width:46px;height:10px" viewBox="0 0 46 10"><path d="M5 1 L1 7 M42 1 L46 7 M4 4 L2 8" stroke="#000" stroke-width="0.9"/><rect x="14" y="5" width="18" height="6" rx="2" fill="#000"/></svg>
<div class="t" style="left:573px;top:17px;font-size:44px;color:#00ff00;letter-spacing:0.5px;-webkit-text-stroke:0.7px #00ff00;text-shadow:1px 3px 0 #000">RH2000 4MVA</div>
<div class="t" style="left:992px;top:16px;font-size:13.4px;font-weight:bold;color:#3c3c3c">Keine Bretter</div>
<div class="t" style="left:1134px;top:15px;font-size:18px;color:#000">20.09.2024 16:02:40</div>
<div style="left:1170px;top:34px;width:105px;height:12px;background:#0000ff;border:1px solid #000"></div>
<div class="t" style="left:1357px;top:16px;font-size:13.6px;font-weight:bold;color:#000">Produkt:</div>
<div style="left:1420px;top:14px;width:215px;height:20px;border:1px solid #000"></div>
<div class="t" style="left:1420px;top:16px;width:215px;text-align:center;font-size:13.6px;font-weight:bold;color:#ffff00">Platte 50/50/5 anthr.</div>
<div style="left:1420px;top:35px;width:110px;height:12px;border:1px solid #000"></div>
<div style="left:1595px;top:35px;width:40px;height:12px;border:1px solid #000"></div>
<div style="left:1376px;top:38px;width:10px;height:3px;background:#101010"></div>
<div style="left:1552px;top:38px;width:6px;height:3px;background:#101010"></div><div style="left:1572px;top:39px;width:3px;height:2px;background:#101010"></div>
<div style="left:1603px;top:39px;width:23px;height:2px;background:repeating-linear-gradient(90deg,#ffff00 0 3px,transparent 3px 6px)"></div>
<div style="left:270px;top:1000px;width:1375px;height:75px;background:#8a8a8a"></div>
<div style="left:275px;top:990px;width:1363px;height:78px;border-bottom:3px solid #fff;border-left:3px solid #fff;border-right:3px solid #fff"></div>
<div style="left:1638px;top:990px;width:2px;height:79px;background:#303030"></div>
<div style="left:278px;top:990px;width:1px;height:75px;background:#303030"></div>
<div style="left:277px;top:1068px;width:1363px;height:1px;background:#303030"></div>
<div style="left:289px;top:990px;width:671px;height:64px;background:#b4b4b4;border:2px solid #000"></div>
<div style="left:958px;top:990px;width:672px;height:64px;background:#b4b4b4;border:2px solid #000"></div>
<div style="left:843px;top:1005px;width:110px;height:23px;background:#000"></div>
<div style="left:846px;top:1008px;width:45px;height:15px;background:linear-gradient(90deg,#20ff00,#60ff00 70%,#80ff00)"></div>
<div style="left:893px;top:1008px;width:45px;height:15px;background:linear-gradient(90deg,#70ff00,#20ff00)"></div>
<div style="left:948px;top:1005px;width:3px;height:22px;background:linear-gradient(#ff0000,#00ff00,#0000ff)"></div>
<div style="left:169px;top:40px;width:1582px;height:971px;background:#000"></div>
<div style="left:170px;top:41px;width:1580px;height:32px;background:#fff"></div>
<svg style="left:179px;top:48px;width:16px;height:16px" viewBox="0 0 16 16"><path d="M2 14 Q5 6 13 1 Q11 6 15 10 Q9 9 2 14 Z" fill="#1f7a86"/></svg>
<div class="t" style="left:201px;top:51px;font-size:12px;color:#000">Ergebnisbild Detailansicht</div>
<svg style="left:1620px;top:41px;width:130px;height:32px" viewBox="0 0 130 32"><path d="M11 15.5 H21" stroke="#000" stroke-width="1"/><rect x="56.5" y="10.5" width="9" height="9" fill="none" stroke="#000" stroke-width="1"/><path d="M102 10 L112 20 M112 10 L102 20" stroke="#000" stroke-width="1.1"/></svg>
<div style="left:396px;top:303px;width:490px;height:498px;background:radial-gradient(ellipse 45px 70px at 455px 25px, rgba(200,255,0,0.75), rgba(200,255,0,0) 100%),radial-gradient(ellipse 40px 60px at 450px 470px, rgba(160,255,0,0.5), rgba(160,255,0,0) 100%),repeating-linear-gradient(90deg, rgba(255,255,0,0) 0px, rgba(255,255,0,0.03) 12px, rgba(255,255,0,0) 24px),linear-gradient(90deg,#12ff00 0%,#1cff00 35%,#30ff00 55%,#48ff00 70%,#60ff00 82%,#80ff00 93%,#78ff00 97%,#50ff00 100%)"></div>
<div style="left:914px;top:302px;width:490px;height:498px;clip-path:polygon(0 1px,100% 0,100% 492px,0 498px);background:radial-gradient(ellipse 50px 80px at 25px 60px, rgba(180,255,0,0.55), rgba(180,255,0,0) 100%),repeating-linear-gradient(90deg, rgba(255,255,0,0.10) 0px, rgba(255,255,0,0) 14px, rgba(255,255,0,0.10) 28px),linear-gradient(90deg,#68ff00 0%,#70ff00 6%,#60ff00 20%,#4cff00 40%,#38ff00 60%,#20ff00 80%,#10ff00 100%)"></div>
<svg style="left:398px;top:307px;width:82px;height:36px" viewBox="-6 -6 82 36"><g fill="none" stroke="#000" stroke-width="10" stroke-linecap="round" stroke-linejoin="round"><g transform="translate(0.0,0)"><path d="M13.2 1.9 H4.2 L3.3 11.1 C4.7 9.9 6.3 9.3 8 9.3 C11.6 9.3 13.9 11.8 13.9 15.5 C13.9 19.3 11.4 22.1 7.8 22.1 C5.2 22.1 3.1 20.8 2.1 18.6"/></g><g transform="translate(20.8,0)"><ellipse cx="7.9" cy="12" rx="6" ry="10.1"/></g><circle fill="#000" stroke="none" cx="44.5" cy="21" r="5.9"/><g transform="translate(52.1,0)"><path d="M2.6 1.9 H13.1 L7.4 9.7 C11.5 9.5 13.9 12.1 13.9 15.7 C13.9 19.6 11.3 22.1 7.8 22.1 C5.2 22.1 3.1 20.8 2.1 18.6"/></g></g><g fill="none" stroke="#fff" stroke-width="3.9" stroke-linecap="round" stroke-linejoin="round"><g transform="translate(0.0,0)"><path d="M13.2 1.9 H4.2 L3.3 11.1 C4.7 9.9 6.3 9.3 8 9.3 C11.6 9.3 13.9 11.8 13.9 15.5 C13.9 19.3 11.4 22.1 7.8 22.1 C5.2 22.1 3.1 20.8 2.1 18.6"/></g><g transform="translate(20.8,0)"><ellipse cx="7.9" cy="12" rx="6" ry="10.1"/></g><circle fill="#fff" stroke="none" cx="44.5" cy="21" r="2.9"/><g transform="translate(52.1,0)"><path d="M2.6 1.9 H13.1 L7.4 9.7 C11.5 9.5 13.9 12.1 13.9 15.7 C13.9 19.6 11.3 22.1 7.8 22.1 C5.2 22.1 3.1 20.8 2.1 18.6"/></g></g></svg>
<svg style="left:803px;top:307px;width:82px;height:36px" viewBox="-6 -6 82 36"><g fill="none" stroke="#000" stroke-width="10" stroke-linecap="round" stroke-linejoin="round"><g transform="translate(0.0,0)"><path d="M13.2 1.9 H4.2 L3.3 11.1 C4.7 9.9 6.3 9.3 8 9.3 C11.6 9.3 13.9 11.8 13.9 15.5 C13.9 19.3 11.4 22.1 7.8 22.1 C5.2 22.1 3.1 20.8 2.1 18.6"/></g><g transform="translate(20.8,0)"><path d="M2.6 7 L8.6 2 V22"/></g><circle fill="#000" stroke="none" cx="44.5" cy="21" r="5.9"/><g transform="translate(52.1,0)"><path d="M2.6 1.9 H13.1 L7.4 9.7 C11.5 9.5 13.9 12.1 13.9 15.7 C13.9 19.6 11.3 22.1 7.8 22.1 C5.2 22.1 3.1 20.8 2.1 18.6"/></g></g><g fill="none" stroke="#fff" stroke-width="3.9" stroke-linecap="round" stroke-linejoin="round"><g transform="translate(0.0,0)"><path d="M13.2 1.9 H4.2 L3.3 11.1 C4.7 9.9 6.3 9.3 8 9.3 C11.6 9.3 13.9 11.8 13.9 15.5 C13.9 19.3 11.4 22.1 7.8 22.1 C5.2 22.1 3.1 20.8 2.1 18.6"/></g><g transform="translate(20.8,0)"><path d="M2.6 7 L8.6 2 V22"/></g><circle fill="#fff" stroke="none" cx="44.5" cy="21" r="2.9"/><g transform="translate(52.1,0)"><path d="M2.6 1.9 H13.1 L7.4 9.7 C11.5 9.5 13.9 12.1 13.9 15.7 C13.9 19.6 11.3 22.1 7.8 22.1 C5.2 22.1 3.1 20.8 2.1 18.6"/></g></g></svg>
<svg style="left:600px;top:533px;width:82px;height:36px" viewBox="-6 -6 82 36"><g fill="none" stroke="#000" stroke-width="10" stroke-linecap="round" stroke-linejoin="round"><g transform="translate(0.0,0)"><path d="M13.2 1.9 H4.2 L3.3 11.1 C4.7 9.9 6.3 9.3 8 9.3 C11.6 9.3 13.9 11.8 13.9 15.5 C13.9 19.3 11.4 22.1 7.8 22.1 C5.2 22.1 3.1 20.8 2.1 18.6"/></g><g transform="translate(20.8,0)"><ellipse cx="7.9" cy="12" rx="6" ry="10.1"/></g><circle fill="#000" stroke="none" cx="44.5" cy="21" r="5.9"/><g transform="translate(52.1,0)"><path d="M12.9 4.3 C11.9 2.7 10.3 1.9 8.5 1.9 C4.4 1.9 2 5.8 2 12.4 C2 18.8 4.4 22.1 8 22.1 C11.6 22.1 13.9 19.5 13.9 15.6 C13.9 11.9 11.6 9.5 8.2 9.5 C5.4 9.5 3.1 11.1 2.3 14"/></g></g><g fill="none" stroke="#fff" stroke-width="3.9" stroke-linecap="round" stroke-linejoin="round"><g transform="translate(0.0,0)"><path d="M13.2 1.9 H4.2 L3.3 11.1 C4.7 9.9 6.3 9.3 8 9.3 C11.6 9.3 13.9 11.8 13.9 15.5 C13.9 19.3 11.4 22.1 7.8 22.1 C5.2 22.1 3.1 20.8 2.1 18.6"/></g><g transform="translate(20.8,0)"><ellipse cx="7.9" cy="12" rx="6" ry="10.1"/></g><circle fill="#fff" stroke="none" cx="44.5" cy="21" r="2.9"/><g transform="translate(52.1,0)"><path d="M12.9 4.3 C11.9 2.7 10.3 1.9 8.5 1.9 C4.4 1.9 2 5.8 2 12.4 C2 18.8 4.4 22.1 8 22.1 C11.6 22.1 13.9 19.5 13.9 15.6 C13.9 11.9 11.6 9.5 8.2 9.5 C5.4 9.5 3.1 11.1 2.3 14"/></g></g></svg>
<svg style="left:398px;top:762px;width:82px;height:36px" viewBox="-6 -6 82 36"><g fill="none" stroke="#000" stroke-width="10" stroke-linecap="round" stroke-linejoin="round"><g transform="translate(0.0,0)"><path d="M13.2 1.9 H4.2 L3.3 11.1 C4.7 9.9 6.3 9.3 8 9.3 C11.6 9.3 13.9 11.8 13.9 15.5 C13.9 19.3 11.4 22.1 7.8 22.1 C5.2 22.1 3.1 20.8 2.1 18.6"/></g><g transform="translate(20.8,0)"><ellipse cx="7.9" cy="12" rx="6" ry="10.1"/></g><circle fill="#000" stroke="none" cx="44.5" cy="21" r="5.9"/><g transform="translate(52.1,0)"><path d="M2.6 1.9 H13.1 L7.4 9.7 C11.5 9.5 13.9 12.1 13.9 15.7 C13.9 19.6 11.3 22.1 7.8 22.1 C5.2 22.1 3.1 20.8 2.1 18.6"/></g></g><g fill="none" stroke="#fff" stroke-width="3.9" stroke-linecap="round" stroke-linejoin="round"><g transform="translate(0.0,0)"><path d="M13.2 1.9 H4.2 L3.3 11.1 C4.7 9.9 6.3 9.3 8 9.3 C11.6 9.3 13.9 11.8 13.9 15.5 C13.9 19.3 11.4 22.1 7.8 22.1 C5.2 22.1 3.1 20.8 2.1 18.6"/></g><g transform="translate(20.8,0)"><ellipse cx="7.9" cy="12" rx="6" ry="10.1"/></g><circle fill="#fff" stroke="none" cx="44.5" cy="21" r="2.9"/><g transform="translate(52.1,0)"><path d="M2.6 1.9 H13.1 L7.4 9.7 C11.5 9.5 13.9 12.1 13.9 15.7 C13.9 19.6 11.3 22.1 7.8 22.1 C5.2 22.1 3.1 20.8 2.1 18.6"/></g></g></svg>
<svg style="left:803px;top:762px;width:82px;height:36px" viewBox="-6 -6 82 36"><g fill="none" stroke="#000" stroke-width="10" stroke-linecap="round" stroke-linejoin="round"><g transform="translate(0.0,0)"><path d="M13.2 1.9 H4.2 L3.3 11.1 C4.7 9.9 6.3 9.3 8 9.3 C11.6 9.3 13.9 11.8 13.9 15.5 C13.9 19.3 11.4 22.1 7.8 22.1 C5.2 22.1 3.1 20.8 2.1 18.6"/></g><g transform="translate(20.8,0)"><path d="M2.6 7 L8.6 2 V22"/></g><circle fill="#000" stroke="none" cx="44.5" cy="21" r="5.9"/><g transform="translate(52.1,0)"><path d="M2.6 7 L8.6 2 V22"/></g></g><g fill="none" stroke="#fff" stroke-width="3.9" stroke-linecap="round" stroke-linejoin="round"><g transform="translate(0.0,0)"><path d="M13.2 1.9 H4.2 L3.3 11.1 C4.7 9.9 6.3 9.3 8 9.3 C11.6 9.3 13.9 11.8 13.9 15.5 C13.9 19.3 11.4 22.1 7.8 22.1 C5.2 22.1 3.1 20.8 2.1 18.6"/></g><g transform="translate(20.8,0)"><path d="M2.6 7 L8.6 2 V22"/></g><circle fill="#fff" stroke="none" cx="44.5" cy="21" r="2.9"/><g transform="translate(52.1,0)"><path d="M2.6 7 L8.6 2 V22"/></g></g></svg>
<svg style="left:915px;top:307px;width:82px;height:36px" viewBox="-6 -6 82 36"><g fill="none" stroke="#000" stroke-width="10" stroke-linecap="round" stroke-linejoin="round"><g transform="translate(0.0,0)"><path d="M13.2 1.9 H4.2 L3.3 11.1 C4.7 9.9 6.3 9.3 8 9.3 C11.6 9.3 13.9 11.8 13.9 15.5 C13.9 19.3 11.4 22.1 7.8 22.1 C5.2 22.1 3.1 20.8 2.1 18.6"/></g><g transform="translate(20.8,0)"><path d="M2.6 7 L8.6 2 V22"/></g><circle fill="#000" stroke="none" cx="44.5" cy="21" r="5.9"/><g transform="translate(52.1,0)"><path d="M2.4 7.2 C2.8 3.8 5.2 1.9 8.1 1.9 C11.3 1.9 13.8 4 13.8 7.2 C13.8 10.2 11.8 12.2 8.6 14.8 L2.3 22.1 H14.1"/></g></g><g fill="none" stroke="#fff" stroke-width="3.9" stroke-linecap="round" stroke-linejoin="round"><g transform="translate(0.0,0)"><path d="M13.2 1.9 H4.2 L3.3 11.1 C4.7 9.9 6.3 9.3 8 9.3 C11.6 9.3 13.9 11.8 13.9 15.5 C13.9 19.3 11.4 22.1 7.8 22.1 C5.2 22.1 3.1 20.8 2.1 18.6"/></g><g transform="translate(20.8,0)"><path d="M2.6 7 L8.6 2 V22"/></g><circle fill="#fff" stroke="none" cx="44.5" cy="21" r="2.9"/><g transform="translate(52.1,0)"><path d="M2.4 7.2 C2.8 3.8 5.2 1.9 8.1 1.9 C11.3 1.9 13.8 4 13.8 7.2 C13.8 10.2 11.8 12.2 8.6 14.8 L2.3 22.1 H14.1"/></g></g></svg>
<svg style="left:1322px;top:307px;width:82px;height:36px" viewBox="-6 -6 82 36"><g fill="none" stroke="#000" stroke-width="10" stroke-linecap="round" stroke-linejoin="round"><g transform="translate(0.0,0)"><path d="M13.2 1.9 H4.2 L3.3 11.1 C4.7 9.9 6.3 9.3 8 9.3 C11.6 9.3 13.9 11.8 13.9 15.5 C13.9 19.3 11.4 22.1 7.8 22.1 C5.2 22.1 3.1 20.8 2.1 18.6"/></g><g transform="translate(20.8,0)"><ellipse cx="7.9" cy="12" rx="6" ry="10.1"/></g><circle fill="#000" stroke="none" cx="44.5" cy="21" r="5.9"/><g transform="translate(52.1,0)"><path d="M13.2 1.9 H4.2 L3.3 11.1 C4.7 9.9 6.3 9.3 8 9.3 C11.6 9.3 13.9 11.8 13.9 15.5 C13.9 19.3 11.4 22.1 7.8 22.1 C5.2 22.1 3.1 20.8 2.1 18.6"/></g></g><g fill="none" stroke="#fff" stroke-width="3.9" stroke-linecap="round" stroke-linejoin="round"><g transform="translate(0.0,0)"><path d="M13.2 1.9 H4.2 L3.3 11.1 C4.7 9.9 6.3 9.3 8 9.3 C11.6 9.3 13.9 11.8 13.9 15.5 C13.9 19.3 11.4 22.1 7.8 22.1 C5.2 22.1 3.1 20.8 2.1 18.6"/></g><g transform="translate(20.8,0)"><ellipse cx="7.9" cy="12" rx="6" ry="10.1"/></g><circle fill="#fff" stroke="none" cx="44.5" cy="21" r="2.9"/><g transform="translate(52.1,0)"><path d="M13.2 1.9 H4.2 L3.3 11.1 C4.7 9.9 6.3 9.3 8 9.3 C11.6 9.3 13.9 11.8 13.9 15.5 C13.9 19.3 11.4 22.1 7.8 22.1 C5.2 22.1 3.1 20.8 2.1 18.6"/></g></g></svg>
<svg style="left:1118px;top:533px;width:82px;height:36px" viewBox="-6 -6 82 36"><g fill="none" stroke="#000" stroke-width="10" stroke-linecap="round" stroke-linejoin="round"><g transform="translate(0.0,0)"><path d="M13.2 1.9 H4.2 L3.3 11.1 C4.7 9.9 6.3 9.3 8 9.3 C11.6 9.3 13.9 11.8 13.9 15.5 C13.9 19.3 11.4 22.1 7.8 22.1 C5.2 22.1 3.1 20.8 2.1 18.6"/></g><g transform="translate(20.8,0)"><ellipse cx="7.9" cy="12" rx="6" ry="10.1"/></g><circle fill="#000" stroke="none" cx="44.5" cy="21" r="5.9"/><g transform="translate(52.1,0)"><path d="M13.2 1.9 H4.2 L3.3 11.1 C4.7 9.9 6.3 9.3 8 9.3 C11.6 9.3 13.9 11.8 13.9 15.5 C13.9 19.3 11.4 22.1 7.8 22.1 C5.2 22.1 3.1 20.8 2.1 18.6"/></g></g><g fill="none" stroke="#fff" stroke-width="3.9" stroke-linecap="round" stroke-linejoin="round"><g transform="translate(0.0,0)"><path d="M13.2 1.9 H4.2 L3.3 11.1 C4.7 9.9 6.3 9.3 8 9.3 C11.6 9.3 13.9 11.8 13.9 15.5 C13.9 19.3 11.4 22.1 7.8 22.1 C5.2 22.1 3.1 20.8 2.1 18.6"/></g><g transform="translate(20.8,0)"><ellipse cx="7.9" cy="12" rx="6" ry="10.1"/></g><circle fill="#fff" stroke="none" cx="44.5" cy="21" r="2.9"/><g transform="translate(52.1,0)"><path d="M13.2 1.9 H4.2 L3.3 11.1 C4.7 9.9 6.3 9.3 8 9.3 C11.6 9.3 13.9 11.8 13.9 15.5 C13.9 19.3 11.4 22.1 7.8 22.1 C5.2 22.1 3.1 20.8 2.1 18.6"/></g></g></svg>
<svg style="left:915px;top:760px;width:82px;height:36px" viewBox="-6 -6 82 36"><g fill="none" stroke="#000" stroke-width="10" stroke-linecap="round" stroke-linejoin="round"><g transform="translate(0.0,0)"><path d="M13.2 1.9 H4.2 L3.3 11.1 C4.7 9.9 6.3 9.3 8 9.3 C11.6 9.3 13.9 11.8 13.9 15.5 C13.9 19.3 11.4 22.1 7.8 22.1 C5.2 22.1 3.1 20.8 2.1 18.6"/></g><g transform="translate(20.8,0)"><ellipse cx="7.9" cy="12" rx="6" ry="10.1"/></g><circle fill="#000" stroke="none" cx="44.5" cy="21" r="5.9"/><g transform="translate(52.1,0)"><path d="M2 1.9 H13.9 C10.3 6.8 7.6 14 6.6 22.1"/></g></g><g fill="none" stroke="#fff" stroke-width="3.9" stroke-linecap="round" stroke-linejoin="round"><g transform="translate(0.0,0)"><path d="M13.2 1.9 H4.2 L3.3 11.1 C4.7 9.9 6.3 9.3 8 9.3 C11.6 9.3 13.9 11.8 13.9 15.5 C13.9 19.3 11.4 22.1 7.8 22.1 C5.2 22.1 3.1 20.8 2.1 18.6"/></g><g transform="translate(20.8,0)"><ellipse cx="7.9" cy="12" rx="6" ry="10.1"/></g><circle fill="#fff" stroke="none" cx="44.5" cy="21" r="2.9"/><g transform="translate(52.1,0)"><path d="M2 1.9 H13.9 C10.3 6.8 7.6 14 6.6 22.1"/></g></g></svg>
<svg style="left:1322px;top:760px;width:82px;height:36px" viewBox="-6 -6 82 36"><g fill="none" stroke="#000" stroke-width="10" stroke-linecap="round" stroke-linejoin="round"><g transform="translate(0.0,0)"><path d="M13.2 1.9 H4.2 L3.3 11.1 C4.7 9.9 6.3 9.3 8 9.3 C11.6 9.3 13.9 11.8 13.9 15.5 C13.9 19.3 11.4 22.1 7.8 22.1 C5.2 22.1 3.1 20.8 2.1 18.6"/></g><g transform="translate(20.8,0)"><ellipse cx="7.9" cy="12" rx="6" ry="10.1"/></g><circle fill="#000" stroke="none" cx="44.5" cy="21" r="5.9"/><g transform="translate(52.1,0)"><path d="M2.4 7.2 C2.8 3.8 5.2 1.9 8.1 1.9 C11.3 1.9 13.8 4 13.8 7.2 C13.8 10.2 11.8 12.2 8.6 14.8 L2.3 22.1 H14.1"/></g></g><g fill="none" stroke="#fff" stroke-width="3.9" stroke-linecap="round" stroke-linejoin="round"><g transform="translate(0.0,0)"><path d="M13.2 1.9 H4.2 L3.3 11.1 C4.7 9.9 6.3 9.3 8 9.3 C11.6 9.3 13.9 11.8 13.9 15.5 C13.9 19.3 11.4 22.1 7.8 22.1 C5.2 22.1 3.1 20.8 2.1 18.6"/></g><g transform="translate(20.8,0)"><ellipse cx="7.9" cy="12" rx="6" ry="10.1"/></g><circle fill="#fff" stroke="none" cx="44.5" cy="21" r="2.9"/><g transform="translate(52.1,0)"><path d="M2.4 7.2 C2.8 3.8 5.2 1.9 8.1 1.9 C11.3 1.9 13.8 4 13.8 7.2 C13.8 10.2 11.8 12.2 8.6 14.8 L2.3 22.1 H14.1"/></g></g></svg>
<div style="left:916px;top:302px;width:165px;height:1px;background:repeating-linear-gradient(90deg,#0010ff 0 9px,rgba(0,16,255,0.3) 9px 14px)"></div>
<div style="left:1549px;top:271px;width:40px;height:563px;background:linear-gradient(#ff0000 0%,#ff0000 12%,#ff2000 16%,#ff8000 23.5%,#ffff00 28.8%,#80ff00 35%,#00ff00 43%,#00ff00 57%,#00ff80 64%,#00ffff 71%,#0080ff 78%,#0000ff 87%,#0000ff 100%)"></div>
<div style="left:1538px;top:295px;width:51px;height:3px;background:#fff"></div>
<div class="t" style="left:1496px;top:290px;font-size:16px;color:#fff;letter-spacing:2px">+3.0</div>
<div style="left:1538px;top:431px;width:51px;height:3px;background:#fff"></div>
<div class="t" style="left:1496px;top:426px;font-size:16px;color:#fff;letter-spacing:2px">+1.4</div>
<div style="left:1538px;top:551px;width:51px;height:3px;background:#fff"></div>
<div class="t" style="left:1496px;top:546px;font-size:16px;color:#fff;letter-spacing:2px">&minus;0.0</div>
<div style="left:1538px;top:670px;width:51px;height:3px;background:#fff"></div>
<div class="t" style="left:1496px;top:665px;font-size:16px;color:#fff;letter-spacing:2px">&minus;1.4</div>
<div style="left:1538px;top:806px;width:51px;height:3px;background:#fff"></div>
<div class="t" style="left:1496px;top:801px;font-size:16px;color:#fff;letter-spacing:2px">&minus;3.0</div>
</body></html>
